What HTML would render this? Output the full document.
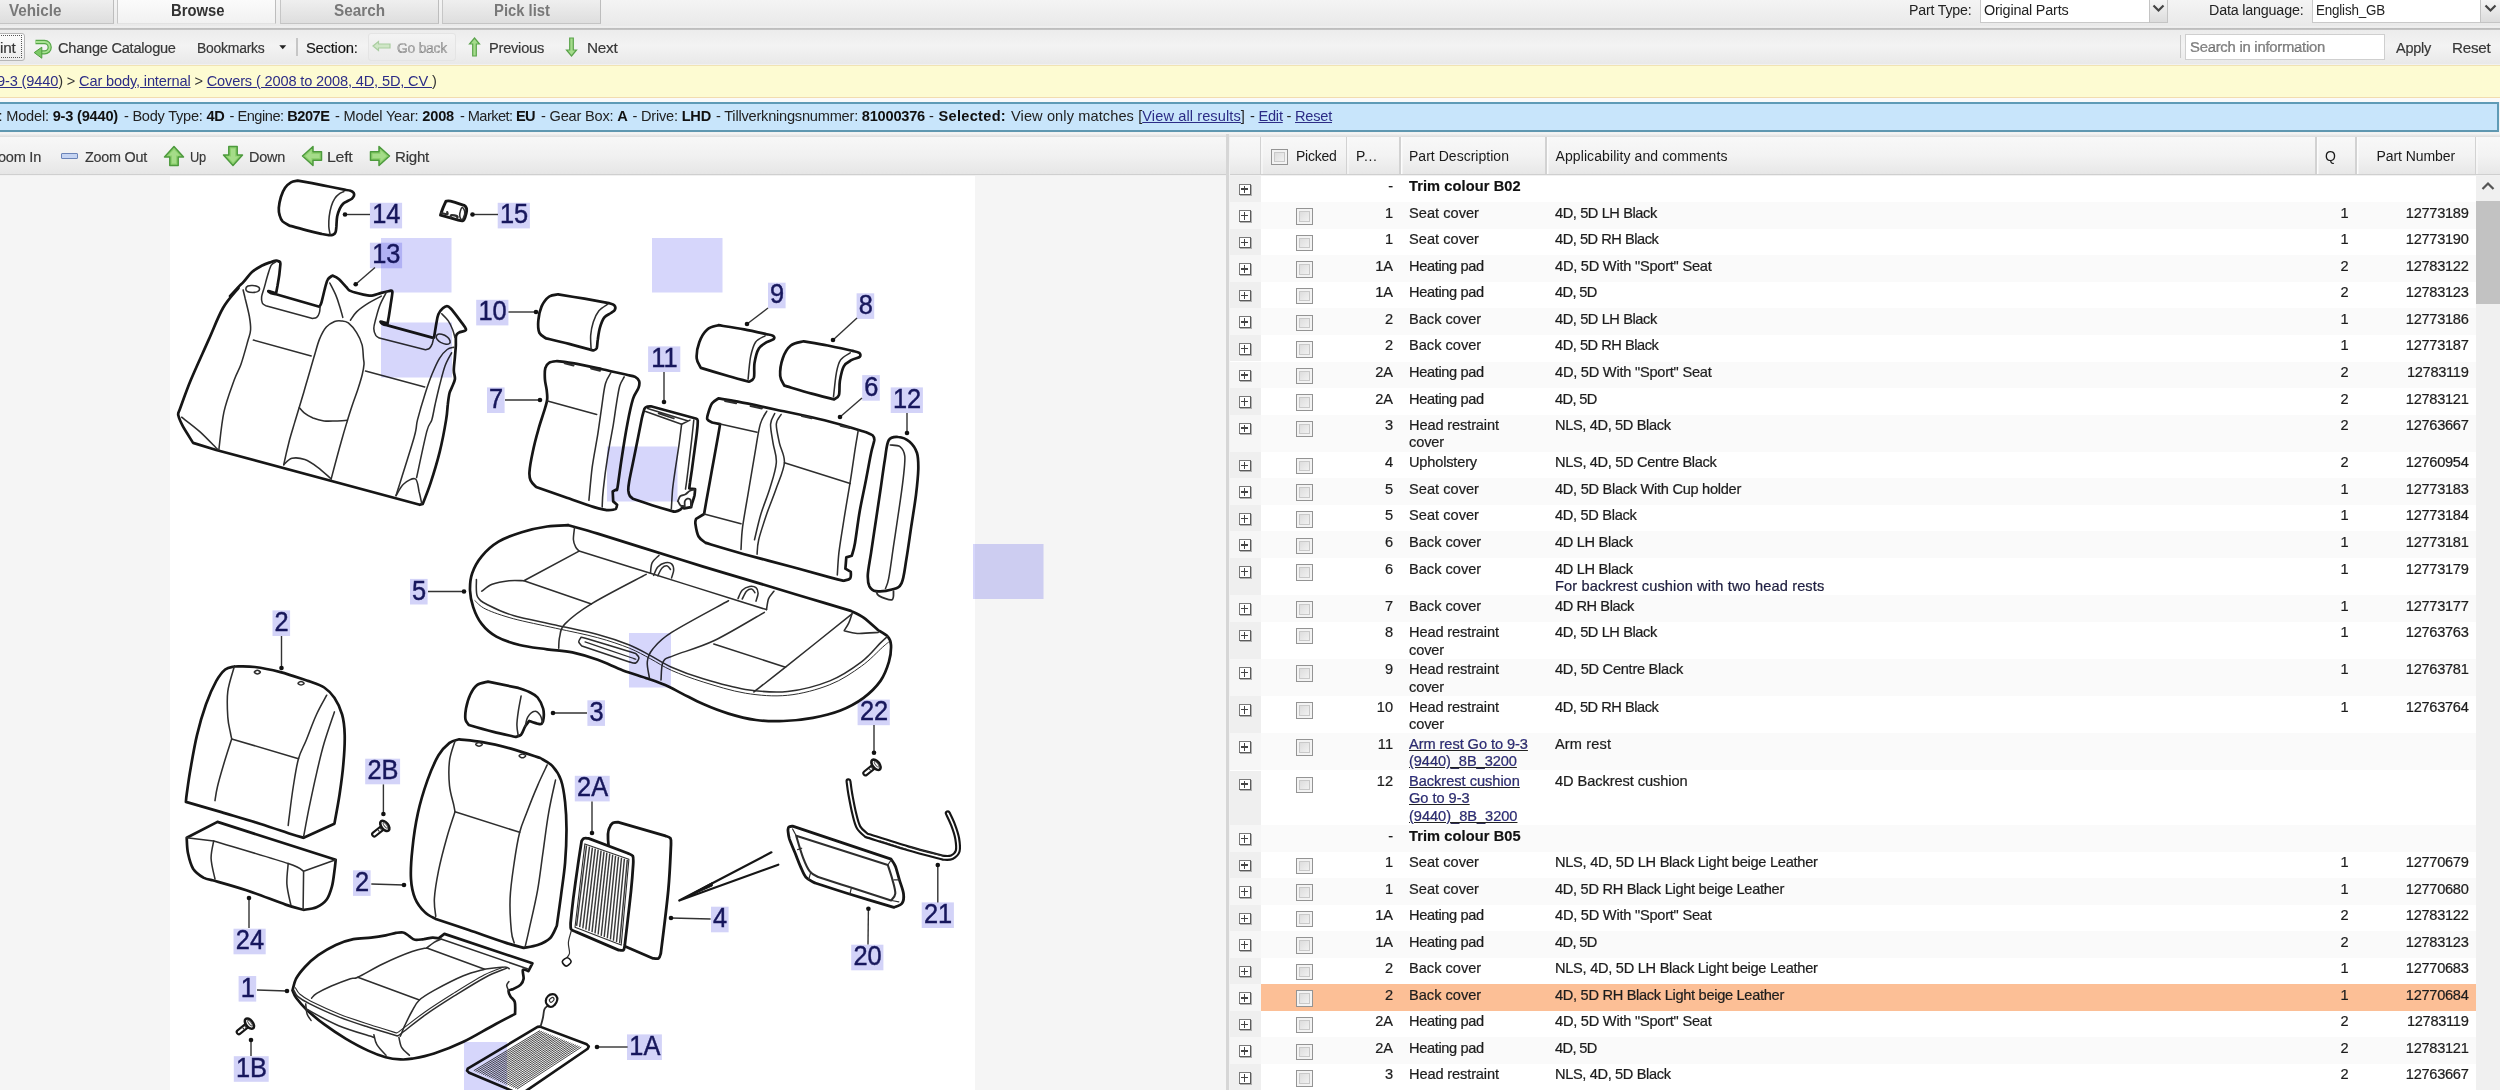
<!DOCTYPE html>
<html><head><meta charset="utf-8"><title>Parts catalogue</title>
<style>
html,body{margin:0;padding:0}
body{width:2500px;height:1090px;overflow:hidden;position:relative;background:#f1f1f1;font-family:"Liberation Sans",sans-serif;font-size:14.6px;color:#1c1c1c}
div,span,i,b,a{box-sizing:border-box}
.abs{position:absolute}
.t{position:absolute;white-space:nowrap;line-height:1}
/* tab bar */
#tabbar{left:0;top:0;width:2500px;height:26px;background:linear-gradient(#f4f4f4,#e9e9e9)}
.tab{position:absolute;top:0;height:24px;border-right:1.5px solid #bdbdbd;border-left:1.5px solid #c6c6c6;border-bottom:1.5px solid #c4c4c4;background:linear-gradient(#efefef,#e3e3e3 70%,#dedede);font-weight:bold;font-size:16px;color:#777;text-align:center;line-height:21px;letter-spacing:-0.2px}
.tab.on{background:linear-gradient(#fbfbfb,#f1f1f1);color:#333;border-bottom-color:#e2e2e2}
.tl{top:2.5px;font-weight:bold;font-size:16px;color:#787878}
#tabline{left:0;top:25.5px;width:2500px;height:4px;background:linear-gradient(#efefef 0,#ececec 60%,#bdbdbd 62%,#c6c6c6 100%)}
/* main toolbar */
#tb{left:0;top:29.5px;width:2500px;height:34.5px;background:linear-gradient(#ececec,#f3f3f3 45%,#e9e9e9)}
.tt{position:absolute;white-space:nowrap;line-height:1;font-size:15.3px;color:#383838;letter-spacing:-0.25px;-webkit-text-stroke:0.2px #383838}
/* breadcrumb */
#bc{left:0;top:65px;width:2500px;height:32.5px;background:#fdfbd2;border-top:1.5px solid #f0e3b4;border-bottom:1.5px solid #f2dcb0}
#bct a,.lnk{color:#2c2c86;text-decoration:underline}
#gap1{left:0;top:97.5px;width:2500px;height:4px;background:#fafafa}
/* vin bar */
#vin{left:0;top:101.5px;width:2498.5px;height:30.5px;background:#c8e5fb;border-top:2px solid #5f9bb6;border-bottom:2px solid #5f97b0;border-right:2px solid #5f9bb6}
.vt{top:108.5px;font-size:14.6px;color:#222}
.vt b{color:#111}
/* sub toolbars */
#ltb{left:0;top:136.5px;width:1226px;height:38.5px;background:linear-gradient(#f7f7f7,#f1f1f1 50%,#e6e6e6);border-bottom:1.5px solid #cfcfcf}
#split{left:1226px;top:134px;width:3px;height:956px;background:#d6d6d6}
#hdr{left:1230px;top:136.5px;width:1270px;height:38.5px;background:linear-gradient(#f8f8f8,#f3f3f3 50%,#e7e7e7);border-bottom:1.5px solid #cfcfcf}
.hs{position:absolute;top:0;width:1.5px;height:37px;background:#d2d2d2;box-shadow:1.5px 0 0 #fcfcfc}
.ht{position:absolute;white-space:nowrap;line-height:1;top:148.6px;font-size:14px;color:#1a1a1a}
/* diagram area */
#dl{left:0;top:176px;width:170px;height:914px;background:#f5f5f5}
#dw{left:170px;top:176px;width:805px;height:914px;background:#fff}
#dr{left:975px;top:176px;width:251px;height:914px;background:#f5f5f5}
/* table */
#tbl{left:1230px;top:175.6px;width:1246px;height:915px;background:#fff;overflow:hidden}
.row{position:absolute;left:1260.5px;width:1215.5px;background:#fff}
.row.alt{background:#fafafa}
.row.sel{background:#fcbf96}
.row>span{position:absolute;top:2.6px;line-height:17.3px;white-space:nowrap;-webkit-text-stroke:0.22px #222}
.ex{position:absolute;left:-30.5px;top:0;width:30.5px;height:100%;background:#efefef}
.row.alt .ex{background:#f6f6f6}
.pl{position:absolute;left:9px;top:8.1px;width:11.6px;height:11.6px;border:1.3px solid #7a7a7a;border-bottom-color:#5c5c5c;border-right-color:#5c5c5c;background:#fff;box-shadow:1px 1px 0 #b0b0b0}
.pl:before{content:"";position:absolute;left:1.2px;right:1.2px;top:3.8px;height:1.4px;background:#444}
.pl:after{content:"";position:absolute;top:1px;bottom:1px;left:3.6px;width:1.4px;background:#444}
.c1{left:35.5px}
.cb{position:absolute;left:0;top:3.6px;width:17px;height:16.5px;border:1.4px solid #949494;background:linear-gradient(135deg,#d6d6d6,#f8f8f8);box-shadow:inset 0 0 0 2px #f3f3f3,inset 0 0 0 3px #c9c9c9}
.c2{right:1083px;text-align:right}
.c3{left:148.5px;white-space:normal}
.c4{left:294.5px}
.c5{right:127.5px}
.c6{right:7.5px;letter-spacing:-0.28px !important}
.grp .c3{font-weight:bold;color:#111}
.cm{color:#1d1d4a}
.row u{color:#2c2c86}
#sb{left:2476px;top:176px;width:24px;height:914px;background:#f0f0f0}
#sbt{left:2476px;top:201px;width:24px;height:102.5px;background:#c2c2c2}
</style></head>
<body>
<!-- tab bar -->
<div id="tabbar" class="abs">
 <div class="tab" style="left:-40px;width:154px"></div>
 <div class="tab on" style="left:117px;width:159px"></div>
 <div class="tab" style="left:279.5px;width:159px"></div>
 <div class="tab" style="left:442px;width:158.5px"></div>
 <span class="t tl" style="left:8.5px;transform:scaleX(0.9518);transform-origin:0 50%">Vehicle</span><span class="t tl" style="left:170.5px;color:#333;transform:scaleX(0.9257);transform-origin:0 50%">Browse</span><span class="t tl" style="left:334px;transform:scaleX(0.9555);transform-origin:0 50%">Search</span><span class="t tl" style="left:494px;transform:scaleX(0.9259);transform-origin:0 50%">Pick list</span>
 <span class="t" style="left:1909px;top:1.5px;font-size:15.2px;color:#222;letter-spacing:-0.2px;transform:scaleX(0.9335);transform-origin:0 50%">Part Type:</span>
 <div class="abs" style="left:1980px;top:-2px;width:188px;height:24.5px;background:#fff;border:1.5px solid #c9c9c9"></div>
 <span class="t" style="left:1984px;top:1.5px;font-size:15.2px;color:#222;letter-spacing:-0.2px;transform:scaleX(0.9473);transform-origin:0 50%">Original Parts</span>
 <div class="abs" style="left:2148.5px;top:-2px;width:19.5px;height:24.5px;background:linear-gradient(#f6f6f6,#dcdcdc);border:1.5px solid #c4c4c4"></div>
 <svg class="abs" style="left:2152px;top:4px" width="13" height="9" viewBox="0 0 13 9"><path d="M1.5 1.5 L6.5 6.5 L11.5 1.5" fill="none" stroke="#444" stroke-width="2.2"/></svg>
 <span class="t" style="left:2209px;top:1.5px;font-size:15.2px;color:#222;letter-spacing:-0.2px;transform:scaleX(0.9428);transform-origin:0 50%">Data language:</span>
 <div class="abs" style="left:2312px;top:-2px;width:190px;height:24.5px;background:#fff;border:1.5px solid #c9c9c9"></div>
 <span class="t" style="left:2316px;top:1.5px;font-size:15.2px;color:#222;letter-spacing:-0.2px;transform:scaleX(0.8823);transform-origin:0 50%">English_GB</span>
 <div class="abs" style="left:2480px;top:-2px;width:22px;height:24.5px;background:linear-gradient(#f6f6f6,#dcdcdc);border:1.5px solid #c4c4c4"></div>
 <svg class="abs" style="left:2484px;top:4px" width="13" height="9" viewBox="0 0 13 9"><path d="M1.5 1.5 L6.5 6.5 L11.5 1.5" fill="none" stroke="#444" stroke-width="2.2"/></svg>
</div>
<div id="tabline" class="abs"></div>

<!-- main toolbar -->
<div id="tb" class="abs"></div>
<div class="abs" style="left:-8px;top:32.5px;width:32.5px;height:28px;border:1.3px solid #b5b5b5;border-radius:3px;background:linear-gradient(#fcfcfc,#ececec)"></div>
<div class="abs" style="left:-8px;top:35px;width:30px;height:23px;border:1.3px dotted #555"></div>
<span class="tt" style="left:0px;top:40px">int</span>
<svg class="abs" style="left:32.5px;top:37.5px" width="21" height="22" viewBox="0 0 21 22"><path d="M2.5 4 H11.5 A5.2 5.2 0 0 1 11.5 14.4 H8" fill="none" stroke="#55a646" stroke-width="4.3"/><path d="M2.5 4 H11.5 A5.2 5.2 0 0 1 11.5 14.4 H8" fill="none" stroke="#a9e294" stroke-width="1.9"/><path d="M8.8 9.2 L1.2 14.6 L8.8 20.2 Z" fill="#7cc966" stroke="#4f9c40" stroke-width="1"/></svg>
<span class="tt" style="left:58px;top:40px;transform:scaleX(0.9528);transform-origin:0 50%">Change Catalogue</span>
<span class="tt" style="left:197px;top:40px;transform:scaleX(0.9089);transform-origin:0 50%">Bookmarks</span>
<svg class="abs" style="left:279px;top:45px" width="8" height="5" viewBox="0 0 8 5"><path d="M0.3 0.3 H7.2 L3.75 4.3 Z" fill="#222"/></svg>
<div class="abs" style="left:296px;top:37.5px;width:1.5px;height:18px;background:#c6c6c6"></div>
<span class="tt" style="left:306px;top:40px;color:#111;transform:scaleX(0.9666);transform-origin:0 50%">Section:</span>
<div class="abs" style="left:367.5px;top:32.5px;width:88px;height:28px;border:1.3px solid #e4e4e4;border-radius:3px;background:linear-gradient(#f3f3f3,#ebebeb)"></div>
<svg class="abs" style="left:372px;top:40px" width="19" height="12" viewBox="0 0 19 12"><path d="M1 6 L6.5 1.5 V4 H18 V8 H6.5 V10.5 Z" fill="#cfe6c6" stroke="#a9cda0" stroke-width="1.2"/></svg>
<span class="tt" style="left:397px;top:40px;color:#b3b3b3;transform:scaleX(0.9055);transform-origin:0 50%">Go back</span>
<svg class="abs" style="left:468px;top:36.5px" width="13" height="20" viewBox="0 0 13 20"><path d="M6.5 1 L11.5 7 H8.3 V19 H4.7 V7 H1.5 Z" fill="#a5dc8c" stroke="#5aa34b" stroke-width="1.2"/></svg>
<span class="tt" style="left:489px;top:40px;transform:scaleX(0.9563);transform-origin:0 50%">Previous</span>
<svg class="abs" style="left:565px;top:36.5px" width="13" height="20" viewBox="0 0 13 20"><path d="M6.5 19 L11.5 13 H8.3 V1 H4.7 V13 H1.5 Z" fill="#a5dc8c" stroke="#5aa34b" stroke-width="1.2"/></svg>
<span class="tt" style="left:586.5px;top:40px;transform:scaleX(1.0015);transform-origin:0 50%">Next</span>
<div class="abs" style="left:2179.5px;top:35px;width:1.5px;height:23px;background:#c9c9c9"></div>
<div class="abs" style="left:2185px;top:33.5px;width:199.5px;height:26.5px;background:#fff;border:1.5px solid #cfcfcf"></div>
<span class="tt" style="left:2189.5px;top:38.5px;color:#8a8a8a;transform:scaleX(0.9692);transform-origin:0 50%">Search in information</span>
<span class="tt" style="left:2396px;top:40px;transform:scaleX(0.9455);transform-origin:0 50%">Apply</span>
<span class="tt" style="left:2452px;top:40px;transform:scaleX(0.9944);transform-origin:0 50%">Reset</span>

<!-- breadcrumb -->
<div id="bc" class="abs"></div>
<span class="t" id="bct" style="left:-3px;top:74px;font-size:14.6px;color:#333;letter-spacing:-0.149px"><a>9-3 (9440</a>) &gt; <a>Car body, internal</a> &gt; <a>Covers ( 2008 to 2008, 4D, 5D, CV </a>)</span>
<div id="gap1" class="abs"></div>

<!-- vin bar -->
<div id="vin" class="abs"></div>
<span class="t vt" style="left:-1.5px;letter-spacing:-0.201px">: Model: <b>9-3 (9440)</b></span>
<span class="t vt" style="left:124px;letter-spacing:-0.258px">- Body Type: <b>4D</b></span>
<span class="t vt" style="left:229.5px;letter-spacing:-0.473px">- Engine: <b>B207E</b></span>
<span class="t vt" style="left:335px;letter-spacing:-0.196px">- Model Year: <b>2008</b></span>
<span class="t vt" style="left:460px;letter-spacing:-0.576px">- Market: <b>EU</b></span>
<span class="t vt" style="left:541px;letter-spacing:-0.209px">- Gear Box: <b>A</b></span>
<span class="t vt" style="left:632.5px;letter-spacing:-0.215px">- Drive: <b>LHD</b></span>
<span class="t vt" style="left:716px;letter-spacing:-0.219px">- Tillverkningsnummer: <b>81000376</b></span>
<span class="t vt" style="left:929px;letter-spacing:0.290px">- <b>Selected:</b></span>
<span class="t vt" style="left:1011px;letter-spacing:0.093px">View only matches [<span class="lnk">View all results</span>]</span>
<span class="t vt" style="left:1250px;letter-spacing:-0.228px">- <span class="lnk">Edit</span> - <span class="lnk">Reset</span></span>

<div class="abs" style="left:0;top:132.5px;width:2500px;height:4px;background:linear-gradient(#f7f7f7,#dcdcdc)"></div>

<!-- left sub toolbar -->
<div id="ltb" class="abs"></div>
<span class="tt" style="left:-2px;top:149px;transform:scaleX(0.9499);transform-origin:0 50%">oom In</span>
<div class="abs" style="left:61px;top:153px;width:16.5px;height:6px;border:1.3px solid #6b84b8;background:#c5d4f2;border-radius:1px"></div>
<span class="tt" style="left:84.5px;top:149px;transform:scaleX(0.9392);transform-origin:0 50%">Zoom Out</span>
<svg class="abs" style="left:163px;top:144.5px" width="22" height="22" viewBox="0 0 22 22"><path d="M11 1.5 L20.5 12 H15.2 V20.5 H6.8 V12 H1.5 Z" fill="#8ed06f" stroke="#4d9a3d" stroke-width="1.5" stroke-linejoin="round"/><path d="M11 4.5 L16.5 10.5 H13 V18.5 H9 V10.5 H5.5 Z" fill="#b4e49b" opacity=".6"/></svg>
<span class="tt" style="left:189.5px;top:149px;transform:scaleX(0.8393);transform-origin:0 50%">Up</span>
<svg class="abs" style="left:222px;top:144.5px" width="22" height="22" viewBox="0 0 22 22"><path d="M11 20.5 L20.5 10 H15.2 V1.5 H6.8 V10 H1.5 Z" fill="#8ed06f" stroke="#4d9a3d" stroke-width="1.5" stroke-linejoin="round"/><path d="M11 17.5 L16.5 11.5 H13 V3.5 H9 V11.5 H5.5 Z" fill="#b4e49b" opacity=".6"/></svg>
<span class="tt" style="left:248.5px;top:149px;transform:scaleX(0.9446);transform-origin:0 50%">Down</span>
<svg class="abs" style="left:301px;top:144.5px" width="22" height="22" viewBox="0 0 22 22"><path d="M1.5 11 L12 1.5 V6.8 H20.5 V15.2 H12 V20.5 Z" fill="#8ed06f" stroke="#4d9a3d" stroke-width="1.5" stroke-linejoin="round"/><path d="M4.5 11 L10.5 5.5 V9 H18.5 V13 H10.5 V16.5 Z" fill="#b4e49b" opacity=".6"/></svg>
<span class="tt" style="left:327px;top:149px;transform:scaleX(1.0402);transform-origin:0 50%">Left</span>
<svg class="abs" style="left:368.5px;top:144.5px" width="22" height="22" viewBox="0 0 22 22"><path d="M20.5 11 L10 1.5 V6.8 H1.5 V15.2 H10 V20.5 Z" fill="#8ed06f" stroke="#4d9a3d" stroke-width="1.5" stroke-linejoin="round"/><path d="M17.5 11 L11.5 5.5 V9 H3.5 V13 H11.5 V16.5 Z" fill="#b4e49b" opacity=".6"/></svg>
<span class="tt" style="left:394.5px;top:149px;transform:scaleX(0.9864);transform-origin:0 50%">Right</span>

<!-- diagram -->
<div id="dl" class="abs"></div><div id="dw" class="abs"></div><div id="dr" class="abs"></div>
<div class="abs" style="left:0;top:176px;width:1226px;height:914px">
<svg width="1226" height="914" viewBox="0 176 1226 914" font-family="Liberation Sans, sans-serif" style="display:block">
<rect x="369.9" y="202.8" width="32.2" height="25.6" fill="#d3d3f8"/>
<rect x="497.7" y="202.8" width="32.2" height="25.6" fill="#d3d3f8"/>
<rect x="369.9" y="242.7" width="32.2" height="25.6" fill="#d3d3f8"/>
<rect x="476.2" y="299.8" width="32.2" height="25.6" fill="#d3d3f8"/>
<rect x="487.0" y="387.4" width="17.6" height="25.6" fill="#d3d3f8"/>
<rect x="410.0" y="578.9" width="17.6" height="25.6" fill="#d3d3f8"/>
<rect x="768.0" y="282.7" width="17.6" height="25.6" fill="#d3d3f8"/>
<rect x="856.6" y="293.3" width="17.6" height="25.6" fill="#d3d3f8"/>
<rect x="648.1" y="346.4" width="32.2" height="25.6" fill="#d3d3f8"/>
<rect x="862.2" y="375.1" width="17.6" height="25.6" fill="#d3d3f8"/>
<rect x="890.7" y="387.4" width="32.2" height="25.6" fill="#d3d3f8"/>
<rect x="272.5" y="610.4" width="17.6" height="25.6" fill="#d3d3f8"/>
<rect x="587.4" y="700.3" width="17.6" height="25.6" fill="#d3d3f8"/>
<rect x="365.2" y="758.7" width="34.9" height="25.6" fill="#d3d3f8"/>
<rect x="574.8" y="775.8" width="34.9" height="25.6" fill="#d3d3f8"/>
<rect x="353.0" y="870.3" width="17.6" height="25.6" fill="#d3d3f8"/>
<rect x="233.5" y="928.7" width="32.2" height="25.6" fill="#d3d3f8"/>
<rect x="238.6" y="976.0" width="17.6" height="25.6" fill="#d3d3f8"/>
<rect x="627.0" y="1034.4" width="34.9" height="25.6" fill="#d3d3f8"/>
<rect x="233.8" y="1056.2" width="34.9" height="25.6" fill="#d3d3f8"/>
<rect x="857.6" y="699.6" width="32.2" height="25.6" fill="#d3d3f8"/>
<rect x="711.0" y="906.7" width="17.6" height="25.6" fill="#d3d3f8"/>
<rect x="921.7" y="902.4" width="32.2" height="25.6" fill="#d3d3f8"/>
<rect x="851.2" y="944.7" width="32.2" height="25.6" fill="#d3d3f8"/>
<path d="M279.5 261.7C279.0 261.5 277.7 260.6 276.1 260.7C274.5 260.8 272.3 261.5 269.9 262.4C267.5 263.2 264.6 264.2 261.6 265.8C258.7 267.4 255.0 269.4 252.0 272.0C249.0 274.7 246.1 279.1 243.8 281.6C241.5 284.2 240.5 284.7 238.3 287.1C236.0 289.6 231.4 294.6 230.0 296.1" fill="none" stroke="#161616" stroke-width="2.7" stroke-linejoin="round" stroke-linecap="round"/>
<path d="M238.4 288.1C235.8 291.4 227.9 299.3 223.0 308.0C218.0 316.7 213.9 328.1 208.5 340.1C203.2 352.1 195.7 368.2 190.8 380.0C185.9 391.8 181.2 405.7 179.2 410.8C179.1 411.6 177.7 412.7 178.3 415.3C178.9 417.9 180.4 421.6 182.8 426.2C185.3 430.8 191.4 440.1 193.1 442.9L216.2 450.0L419.8 504.8L422.7 503.9C424.1 500.4 427.9 491.4 430.7 482.7C433.5 474.1 437.1 462.4 439.7 451.9C442.3 441.4 444.8 427.8 446.1 419.9C447.5 412.0 447.2 408.9 447.8 404.5C448.3 400.1 448.8 396.3 449.4 393.5C450.1 390.8 450.7 390.4 451.6 388.0C452.5 385.6 454.5 382.2 454.9 379.2C455.3 376.3 453.8 374.1 453.8 370.4C453.8 366.7 454.6 361.2 454.9 357.2C455.2 353.2 455.6 349.7 455.8 346.2C456.0 342.7 455.6 338.5 456.0 336.3C456.4 334.1 457.0 333.8 458.2 333.0C459.4 332.2 462.3 331.6 463.2 331.4C463.6 331.0 466.4 330.9 465.9 329.2C465.5 327.4 462.8 324.2 460.4 320.9C458.0 317.6 453.1 311.3 451.6 309.4C450.9 308.8 448.7 306.2 447.2 306.1C445.7 305.9 444.3 306.9 442.8 308.3C441.3 309.6 439.5 311.6 438.4 314.3C437.3 317.0 436.9 320.3 436.2 324.2C435.5 328.1 434.4 335.4 434.0 337.6" fill="none" stroke="#161616" stroke-width="2.7" stroke-linejoin="round" stroke-linecap="round"/>
<path d="M279.5 261.7C279.7 262.0 280.4 261.6 280.4 263.8C280.3 265.9 279.7 271.1 279.3 274.8C278.8 278.4 278.0 282.7 277.5 285.8C276.9 288.9 276.3 292.1 276.1 293.3C274.8 293.0 269.4 291.1 268.5 291.0C267.6 290.9 269.3 292.4 270.6 292.9C271.9 293.5 275.2 294.1 276.1 294.3L319.4 306.7C319.8 306.0 320.6 305.3 321.5 302.3C322.4 299.3 323.9 292.3 324.9 288.5C326.0 284.7 326.4 281.8 327.7 279.6C328.9 277.4 331.7 276.1 332.5 275.5C333.5 276.0 336.3 276.8 338.7 278.9C341.1 281.0 345.1 285.9 347.0 287.8C348.8 289.8 347.9 289.7 349.7 290.6C351.5 291.5 355.0 292.5 358.0 293.3C360.9 294.1 365.1 295.1 367.6 295.4C370.1 295.7 370.8 295.8 373.1 295.4C375.4 295.0 378.4 293.7 381.3 292.9C384.3 292.1 389.4 291.0 391.0 290.6C391.2 290.8 392.4 290.0 392.4 292.0C392.4 293.9 391.6 298.3 391.0 302.3C390.4 306.3 389.5 312.5 388.9 316.0C388.3 319.6 387.8 322.3 387.5 323.6C386.4 323.3 381.5 321.5 380.7 321.5C379.9 321.6 381.6 323.4 382.7 324.0C383.9 324.7 386.7 325.2 387.5 325.4L432.3 337.6" fill="none" stroke="#161616" stroke-width="2.7" stroke-linejoin="round" stroke-linecap="round"/>
<path d="M276.1 261.7C275.3 262.3 272.7 263.0 271.3 265.1C269.9 267.3 269.0 271.1 267.8 274.8C266.7 278.4 265.4 283.5 264.4 287.1C263.4 290.8 262.0 294.1 261.6 296.8C261.3 299.4 261.6 301.5 262.3 303.0C263.0 304.5 265.2 305.3 265.8 305.7L312.6 318.4C313.2 318.2 315.5 318.4 316.7 317.4C317.8 316.5 318.9 314.4 319.4 312.6C320.0 310.8 320.0 307.7 320.1 306.7" fill="none" stroke="#2e2e2e" stroke-width="1.55" stroke-linejoin="round" stroke-linecap="round"/>
<path d="M245.8 288.9C245.8 288.0 246.7 286.6 247.9 286.0C249.0 285.5 251.1 285.4 252.7 285.5C254.3 285.6 256.4 285.9 257.5 286.5C258.7 287.0 259.6 288.1 259.6 288.9C259.6 289.8 258.7 291.0 257.5 291.6C256.4 292.1 254.3 292.4 252.7 292.4C251.1 292.4 249.0 292.3 247.9 291.7C246.7 291.1 245.8 289.9 245.8 288.9Z" fill="none" stroke="#2e2e2e" stroke-width="1.55" stroke-linejoin="round" stroke-linecap="round"/>
<path d="M243.1 289.9C243.4 291.3 244.1 293.8 245.1 298.2C246.2 302.5 248.3 310.8 249.3 316.0C250.2 321.3 250.9 325.7 250.6 329.8C250.4 333.9 249.5 335.1 247.9 340.8C246.3 346.5 243.3 357.7 241.0 364.2C238.7 370.7 237.1 372.0 234.2 380.0C231.4 388.0 226.5 400.4 223.9 412.1C221.4 423.8 219.7 443.7 218.8 450.0" fill="none" stroke="#2e2e2e" stroke-width="1.55" stroke-linejoin="round" stroke-linecap="round"/>
<path d="M253.4 340.1L311.2 355.9" fill="none" stroke="#2e2e2e" stroke-width="1.55" stroke-linejoin="round" stroke-linecap="round"/>
<path d="M283.7 464.8C284.6 460.6 287.7 447.1 289.5 440.0C291.4 432.9 293.0 428.1 294.7 422.4C296.4 416.6 298.2 410.8 299.8 405.5C301.4 400.2 303.0 395.0 304.2 390.8C305.4 386.7 305.4 386.3 307.1 380.7C308.7 375.1 311.9 364.2 313.9 357.3C316.0 350.4 317.4 344.5 319.4 339.4C321.5 334.4 323.8 330.0 326.3 327.1C328.8 324.1 332.0 322.6 334.6 321.5C337.1 320.5 339.2 320.6 341.4 320.9C343.7 321.1 345.8 321.0 348.3 322.9C350.8 324.9 354.3 328.9 356.6 332.6C358.9 336.2 360.9 340.6 362.1 344.9C363.2 349.3 363.1 355.5 363.5 358.7C363.8 361.9 364.2 361.7 364.0 364.4C363.8 367.1 363.2 370.5 362.2 374.7C361.2 378.8 359.4 384.5 357.8 389.4C356.2 394.3 354.4 398.9 352.7 404.0C350.9 409.2 349.4 414.2 347.5 420.2C345.7 426.2 344.4 430.2 341.7 440.0C338.9 449.8 332.9 472.4 331.2 478.9" fill="none" stroke="#2e2e2e" stroke-width="1.55" stroke-linejoin="round" stroke-linecap="round"/>
<path d="M299.4 407.7C300.2 408.6 302.0 411.1 304.2 412.8C306.5 414.6 309.7 416.6 313.0 418.0C316.3 419.3 320.2 420.4 324.0 420.9C327.8 421.4 331.9 421.0 335.8 420.9C339.6 420.8 345.3 420.4 347.2 420.3" fill="none" stroke="#2e2e2e" stroke-width="1.55" stroke-linejoin="round" stroke-linecap="round"/>
<path d="M329.8 283.0C330.8 285.1 334.2 291.3 335.9 295.4C337.7 299.5 338.9 304.1 340.1 307.8C341.2 311.5 342.4 315.8 342.8 317.4M381.3 296.1C379.1 297.4 371.7 301.0 367.6 303.7C363.5 306.3 359.4 309.2 356.6 311.9C353.7 314.7 351.4 318.8 350.4 320.2" fill="none" stroke="#2e2e2e" stroke-width="1.55" stroke-linejoin="round" stroke-linecap="round"/>
<path d="M386.9 291.3C385.7 293.6 381.8 300.4 380.0 305.0C378.1 309.6 376.9 314.9 375.8 318.8C374.8 322.7 373.8 325.7 373.8 328.4C373.8 331.2 374.9 333.7 375.8 335.3C376.8 336.9 378.7 337.6 379.3 338.1L425.4 349.8C426.1 349.5 428.4 349.4 429.5 348.4C430.7 347.3 431.6 345.3 432.3 343.6C432.9 341.8 433.4 339.0 433.6 338.1" fill="none" stroke="#2e2e2e" stroke-width="1.55" stroke-linejoin="round" stroke-linecap="round"/>
<path d="M365.5 371.1L424.7 386.9" fill="none" stroke="#2e2e2e" stroke-width="1.55" stroke-linejoin="round" stroke-linecap="round"/>
<path d="M436.2 336.9C436.3 336.0 436.9 334.7 437.9 334.3C438.8 333.9 440.2 333.9 441.7 334.3C443.3 334.7 445.8 335.8 447.2 336.9C448.6 337.9 449.6 339.6 450.0 340.7C450.3 341.8 450.1 342.9 449.4 343.5C448.8 344.0 447.6 344.4 446.1 344.2C444.6 344.0 442.1 343.1 440.6 342.4C439.1 341.6 438.0 340.5 437.3 339.6C436.6 338.7 436.1 337.7 436.2 336.9Z" fill="none" stroke="#2e2e2e" stroke-width="1.55" stroke-linejoin="round" stroke-linecap="round"/>
<path d="M441.7 313.8C442.8 314.9 446.5 318.2 448.3 320.9C450.1 323.6 451.6 327.0 452.7 329.7C453.8 332.5 454.5 336.1 454.9 337.4" fill="none" stroke="#2e2e2e" stroke-width="1.55" stroke-linejoin="round" stroke-linecap="round"/>
<path d="M453.8 347.3C452.7 347.7 449.6 347.7 447.2 349.5C444.8 351.3 442.1 354.1 439.5 358.3C436.9 362.5 434.2 368.9 431.8 374.8C429.4 380.7 427.6 386.0 425.2 393.5C422.8 401.0 419.4 412.5 417.5 419.9C415.6 427.3 417.6 425.2 414.0 437.8C410.4 450.4 399.0 486.0 396.0 495.6M451.6 352.8C450.5 355.0 447.0 360.5 445.0 366.0C443.0 371.5 441.2 379.4 439.5 385.8C437.9 392.2 436.4 398.8 435.1 404.5C433.8 410.2 433.2 415.5 431.8 419.9C430.4 424.4 429.4 421.8 426.8 431.4C424.3 441.0 418.3 469.9 416.6 477.6" fill="none" stroke="#2e2e2e" stroke-width="1.55" stroke-linejoin="round" stroke-linecap="round"/>
<path d="M297.7 180.6C296.6 180.9 293.1 181.1 291.0 182.3C288.9 183.5 286.8 185.3 285.1 187.8C283.4 190.2 282.0 193.6 280.9 197.0C279.9 200.4 279.0 204.8 278.8 207.9C278.6 211.0 279.0 213.2 279.7 215.5C280.3 217.7 281.0 219.7 282.6 221.4C284.2 223.0 288.2 224.9 289.3 225.6C292.4 226.4 302.3 229.2 307.8 230.6C313.3 232.0 318.6 233.2 322.1 234.0C325.6 234.7 327.7 235.0 328.8 235.2C329.5 235.2 331.9 235.3 333.0 234.8C334.1 234.3 335.0 233.7 335.5 232.3C336.1 230.9 336.1 229.1 336.4 226.4C336.6 223.7 336.6 219.3 337.2 216.3C337.8 213.4 338.7 210.9 339.7 208.8C340.7 206.7 341.7 205.1 343.1 203.7C344.5 202.4 346.6 201.6 348.1 200.8C349.6 199.9 350.9 199.5 351.9 198.7C352.9 197.8 353.7 196.7 354.0 195.7C354.3 194.8 354.1 193.6 353.6 192.8C353.0 192.0 352.0 191.2 350.6 190.7C349.3 190.2 346.4 190.0 345.6 189.9C342.8 189.3 334.4 187.6 328.8 186.5C323.2 185.4 317.2 184.1 312.0 183.1C306.8 182.2 300.1 181.0 297.7 180.6" fill="#fff" stroke="#161616" stroke-width="2.7" stroke-linejoin="round" stroke-linecap="round"/>
<path d="M343.9 191.5C343.1 192.0 340.4 192.9 338.9 194.1C337.3 195.2 335.9 196.7 334.7 198.7C333.4 200.7 332.2 203.3 331.3 206.2C330.4 209.2 329.6 213.0 329.2 216.3C328.8 219.7 328.7 223.4 328.8 226.4C328.9 229.4 329.9 233.1 330.1 234.4" fill="none" stroke="#2e2e2e" stroke-width="1.55" stroke-linejoin="round" stroke-linecap="round"/>
<path d="M440.5 215.1C440.9 213.9 442.1 210.2 443.0 207.9C444.0 205.6 445.5 202.3 446.0 201.2C446.8 201.2 447.5 200.4 450.6 201.2C453.8 202.0 462.5 205.0 464.9 205.8C465.2 206.3 466.4 207.4 466.6 208.8C466.8 210.1 466.6 212.0 466.1 213.8C465.7 215.6 464.7 218.5 464.0 219.7C463.4 220.9 462.6 220.7 462.4 220.9C461.7 220.8 461.8 221.1 458.2 220.1C454.5 219.1 443.5 215.9 440.5 215.1" fill="#fff" stroke="#161616" stroke-width="2.9" stroke-linejoin="round" stroke-linecap="round"/>
<path d="M462.4 207.5C461.6 207.5 460.7 209.8 460.3 211.3C459.8 212.8 459.6 214.9 459.8 216.3C460.1 217.7 461.2 219.7 461.9 219.7C462.6 219.7 463.6 217.7 464.0 216.3C464.5 214.9 465.0 212.8 464.7 211.3C464.4 209.8 463.1 207.5 462.4 207.5Z" fill="none" stroke="#2e2e2e" stroke-width="1.55" stroke-linejoin="round" stroke-linecap="round"/>
<path d="M441.4 213.0C442.3 213.2 446.3 214.4 447.2 214.2C448.2 214.1 447.2 212.5 447.2 212.1M450.6 217.2C450.7 216.8 450.3 215.2 451.4 215.1C452.6 214.9 456.4 215.8 457.3 216.3C458.2 216.9 457.0 218.1 456.9 218.4" fill="none" stroke="#2e2e2e" stroke-width="2.2" stroke-linejoin="round" stroke-linecap="round"/>
<path d="M558.1 294.3C556.6 294.7 552.0 294.5 549.3 296.5C546.5 298.5 543.4 302.4 541.6 306.4C539.8 310.5 538.6 316.3 538.3 320.7C537.9 325.2 538.1 329.9 539.4 332.9C540.7 335.8 544.9 337.5 546.0 338.4C549.8 339.3 561.2 341.9 569.1 343.9C577.0 345.9 589.3 349.4 593.3 350.5C593.9 350.1 595.9 350.1 596.7 348.3C597.4 346.4 597.2 343.0 597.8 339.5C598.3 336.0 598.9 331.0 600.0 327.4C601.1 323.7 602.5 319.8 604.4 317.4C606.2 315.1 609.2 314.3 611.0 313.0C612.7 311.8 614.4 311.0 614.9 309.7C615.5 308.5 615.3 306.4 614.3 305.3C613.2 304.2 609.7 303.5 608.8 303.1C604.7 302.4 593.0 300.2 584.5 298.7C576.1 297.3 562.5 295.1 558.1 294.3" fill="#fff" stroke="#161616" stroke-width="2.7" stroke-linejoin="round" stroke-linecap="round"/>
<path d="M607.7 304.2C606.2 305.3 601.2 307.9 598.9 310.8C596.5 313.8 594.7 317.8 593.3 321.9C592.0 325.9 591.1 330.5 590.7 335.1C590.3 339.7 591.1 347.0 591.1 349.4" fill="none" stroke="#2e2e2e" stroke-width="1.55" stroke-linejoin="round" stroke-linecap="round"/>
<path d="M557.0 361.1C555.7 361.3 551.2 361.4 549.3 362.6C547.3 363.8 546.1 365.4 545.3 368.1C544.6 370.9 544.7 375.4 544.9 379.1C545.1 382.8 546.3 386.6 546.7 390.1C547.0 393.6 547.6 396.4 547.1 400.0C546.6 403.7 545.3 407.2 543.8 412.2C542.3 417.1 540.1 423.2 538.3 429.8C536.4 436.4 534.2 444.8 532.8 451.8C531.3 458.8 529.8 466.9 529.5 471.6C529.1 476.4 529.5 477.9 530.6 480.4C531.7 483.0 535.2 485.9 536.1 487.0C540.9 488.7 555.2 493.7 564.7 497.0C574.3 500.3 586.4 504.7 593.3 506.9C600.3 509.1 604.4 509.6 606.6 510.2C608.0 510.0 613.6 510.0 615.4 509.1C617.1 508.2 616.8 505.4 617.1 504.7L613.2 501.4L612.7 491.5L616.5 489.3C616.7 488.9 616.7 492.6 617.6 487.0C618.5 481.5 620.3 466.9 622.0 456.2C623.6 445.6 625.7 432.7 627.5 423.2C629.3 413.6 631.2 404.8 633.0 398.9C634.8 393.1 637.5 390.9 638.5 387.9C639.5 385.0 639.7 383.2 639.2 381.3C638.6 379.5 637.0 377.9 635.2 376.9C633.4 375.9 629.7 375.4 628.6 375.2C624.2 374.2 611.0 371.1 602.2 369.2C593.3 367.3 583.3 365.1 575.7 363.7C568.2 362.3 560.1 361.5 557.0 361.1" fill="#fff" stroke="#161616" stroke-width="2.7" stroke-linejoin="round" stroke-linecap="round"/>
<path d="M611.0 372.5C610.1 374.3 606.9 378.4 605.5 383.5C604.0 388.7 603.4 394.9 602.2 403.3C600.9 411.8 599.4 423.5 597.8 434.2C596.1 444.8 593.7 456.2 592.2 467.2C590.8 478.2 589.5 494.8 588.9 500.3" fill="none" stroke="#2e2e2e" stroke-width="1.55" stroke-linejoin="round" stroke-linecap="round"/>
<path d="M624.2 376.9C623.5 378.4 621.1 381.3 619.8 385.7C618.5 390.1 617.6 396.7 616.5 403.3C615.4 410.0 614.6 416.6 613.2 425.4C611.7 434.2 609.3 445.6 607.7 456.2C606.0 466.9 604.2 480.8 603.3 489.3C602.3 497.7 602.3 503.9 602.2 506.9" fill="none" stroke="#2e2e2e" stroke-width="1.55" stroke-linejoin="round" stroke-linecap="round"/>
<path d="M547.5 401.1L596.7 414.4" fill="none" stroke="#2e2e2e" stroke-width="1.55" stroke-linejoin="round" stroke-linecap="round"/>
<path d="M564.7 363.3L573.5 365.5M591.1 368.5L600.0 370.7" fill="none" stroke="#2e2e2e" stroke-width="2" stroke-linejoin="round" stroke-linecap="round"/>
<path d="M644.4 408.9C644.7 408.6 645.2 407.4 646.3 407.0C647.4 406.5 650.1 406.4 650.8 406.3L695.7 418.5C696.1 418.8 697.4 418.3 697.7 420.4C697.9 422.6 697.6 426.3 697.0 431.3C696.5 436.4 695.3 444.2 694.5 450.6C693.6 457.0 692.6 464.5 691.9 469.9C691.1 475.2 690.4 479.6 690.0 482.7C689.5 485.8 689.4 487.5 689.3 488.5L695.1 489.1C695.0 490.2 694.9 493.2 694.5 495.5C694.0 497.9 692.7 501.3 692.1 503.2C691.6 505.2 691.4 506.4 691.2 507.1L684.2 508.4L682.9 506.4C682.5 507.0 681.6 508.8 680.3 509.7C679.1 510.5 676.7 511.4 675.2 511.6C673.7 511.8 672.0 511.0 671.3 510.9C668.1 510.0 658.5 507.2 652.1 505.2C645.7 503.1 636.0 499.8 632.8 498.7C632.3 498.2 630.4 496.9 629.6 495.5C628.9 494.1 628.5 492.5 628.3 490.4C628.2 488.3 628.2 487.2 629.0 482.7C629.7 478.2 631.3 470.9 632.8 463.4C634.3 456.0 636.5 445.3 638.0 437.8C639.5 430.3 640.8 423.3 641.8 418.5C642.9 413.7 644.0 410.5 644.4 408.9" fill="#fff" stroke="#161616" stroke-width="2.7" stroke-linejoin="round" stroke-linecap="round"/>
<path d="M645.7 411.5L681.6 424.3L690.0 420.1M647.6 408.5L687.4 420.8M658.5 413.6L673.9 418.5" fill="none" stroke="#2e2e2e" stroke-width="1.55" stroke-linejoin="round" stroke-linecap="round"/>
<path d="M681.6 424.3C681.2 427.6 680.1 436.6 679.1 444.2C678.0 451.8 676.3 462.4 675.2 469.9C674.1 477.3 673.3 482.6 672.6 489.1C672.0 495.6 671.6 505.7 671.3 509.0M693.8 420.1C693.5 423.0 692.6 431.2 691.9 437.8C691.1 444.4 690.2 452.5 689.3 459.6C688.5 466.6 687.4 475.2 686.8 480.1C686.1 485.0 685.7 487.6 685.5 489.1" fill="none" stroke="#2e2e2e" stroke-width="1.55" stroke-linejoin="round" stroke-linecap="round"/>
<path d="M677.8 501.3C678.2 500.5 679.1 497.4 680.3 496.2C681.6 495.0 683.9 495.2 685.5 494.2C687.1 493.3 688.4 491.5 690.0 490.7C691.5 489.8 693.9 489.6 694.7 489.4M678.4 502.0C678.7 502.5 679.5 504.4 680.3 505.2C681.1 505.9 682.7 506.2 683.2 506.4M684.8 507.1C684.8 506.1 684.4 502.7 684.8 501.3C685.3 499.9 686.4 499.0 687.4 498.7C688.4 498.5 690.0 498.7 690.6 500.0C691.2 501.3 690.8 505.4 690.9 506.4" fill="none" stroke="#2e2e2e" stroke-width="1.8" stroke-linejoin="round" stroke-linecap="round"/>
<path d="M718.5 325.2C716.7 325.9 710.5 326.6 707.3 329.4C704.1 332.2 701.0 337.4 699.3 342.2C697.5 347.1 696.4 354.0 696.7 358.3C697.0 362.6 700.2 366.3 700.9 367.9C705.4 369.3 720.1 373.7 728.2 376.0C736.2 378.3 745.6 380.8 749.0 381.7C749.8 381.0 752.9 380.7 753.9 377.6C754.8 374.5 753.7 367.9 754.5 363.1C755.3 358.3 756.6 352.1 758.7 348.7C760.7 345.2 764.2 343.9 766.7 342.2C769.2 340.6 772.7 340.1 773.8 339.0C774.8 338.0 774.3 336.6 773.1 335.8C771.9 335.0 767.8 334.5 766.7 334.2C763.0 333.4 752.2 330.9 744.2 329.4C736.2 327.9 722.8 325.9 718.5 325.2" fill="#fff" stroke="#161616" stroke-width="2.7" stroke-linejoin="round" stroke-linecap="round"/>
<path d="M765.1 335.8C763.5 336.9 757.9 338.8 755.5 342.2C753.1 345.7 751.9 350.5 750.6 356.7C749.4 362.9 748.5 375.4 748.1 379.2" fill="none" stroke="#2e2e2e" stroke-width="1.55" stroke-linejoin="round" stroke-linecap="round"/>
<path d="M803.6 341.3C801.5 342.0 794.3 342.6 790.8 345.5C787.3 348.3 784.5 353.2 782.8 358.3C781.0 363.4 779.9 371.4 780.2 376.0C780.5 380.5 783.7 384.0 784.4 385.6C788.9 386.9 803.4 391.3 811.7 393.6C819.9 395.9 830.4 398.4 834.1 399.4C834.9 398.7 838.0 398.3 838.9 395.2C839.9 392.1 839.1 385.6 839.9 380.8C840.7 376.0 841.8 369.8 843.8 366.3C845.7 362.9 849.1 361.5 851.8 359.9C854.5 358.3 858.6 357.9 859.8 356.7C861.0 355.5 860.4 353.8 859.2 352.8C858.0 351.9 853.8 351.2 852.8 350.9C848.6 350.0 835.9 347.1 827.7 345.5C819.5 343.9 807.6 342.0 803.6 341.3" fill="#fff" stroke="#161616" stroke-width="2.7" stroke-linejoin="round" stroke-linecap="round"/>
<path d="M850.2 352.8C848.6 354.0 842.9 356.6 840.6 359.9C838.2 363.2 837.6 366.6 836.4 372.8C835.2 378.9 834.0 392.8 833.5 396.8" fill="none" stroke="#2e2e2e" stroke-width="1.55" stroke-linejoin="round" stroke-linecap="round"/>
<path d="M718.5 398.4C717.5 399.2 713.8 400.8 712.1 403.3C710.4 405.7 709.1 410.2 708.3 412.9C707.5 415.6 706.7 417.7 707.3 419.3C707.9 420.9 711.3 422.0 712.1 422.5L720.1 424.1C719.8 426.3 719.2 429.5 717.9 437.0C716.6 444.5 714.0 458.4 712.1 469.1C710.2 479.8 707.7 493.7 706.3 501.2C705.0 508.7 704.5 511.9 704.1 514.0L696.1 518.9C695.9 519.7 695.0 520.7 695.4 523.7C695.8 526.6 696.9 533.3 698.6 536.5C700.3 539.7 704.5 541.9 705.7 542.9C712.1 544.8 729.8 550.2 744.2 554.2C758.7 558.2 777.9 563.1 792.4 567.0C806.8 570.9 822.4 575.3 830.9 577.6C839.5 579.9 841.6 580.3 843.8 580.8C844.8 580.4 849.0 579.8 850.2 578.3C851.4 576.8 850.7 572.9 850.8 571.8L845.4 568.6L846.3 557.4L851.8 555.8C852.3 553.6 853.7 550.4 855.0 542.9C856.3 535.4 857.9 521.5 859.8 510.8C861.7 500.1 864.4 488.3 866.2 478.7C868.1 469.1 869.7 459.4 871.1 453.0C872.4 446.6 874.0 443.1 874.3 440.2C874.5 437.2 874.0 436.7 872.7 435.4C871.3 434.0 867.3 432.7 866.2 432.2C859.3 430.2 839.5 424.0 824.5 420.3C809.5 416.5 790.8 412.8 776.3 409.7C761.9 406.6 747.4 403.5 737.8 401.7C728.2 399.8 721.7 399.0 718.5 398.4" fill="#fff" stroke="#161616" stroke-width="2.7" stroke-linejoin="round" stroke-linecap="round"/>
<path d="M766.7 411.3C765.6 413.4 762.1 417.7 760.3 424.1C758.4 430.6 757.3 439.1 755.5 449.8C753.6 460.5 751.2 475.5 749.0 488.3C746.9 501.2 744.0 516.7 742.6 526.9C741.3 537.0 741.3 545.6 741.0 549.4" fill="none" stroke="#2e2e2e" stroke-width="1.55" stroke-linejoin="round" stroke-linecap="round"/>
<path d="M781.1 414.5C780.3 416.1 776.6 419.3 776.3 424.1C776.1 428.9 778.2 437.0 779.5 443.4C780.9 449.8 784.9 455.2 784.4 462.7C783.8 470.2 779.3 479.8 776.3 488.3C773.4 496.9 769.6 505.5 766.7 514.0C763.8 522.6 760.3 533.0 758.7 539.7C757.1 546.4 757.3 551.8 757.1 554.2" fill="none" stroke="#2e2e2e" stroke-width="1.55" stroke-linejoin="round" stroke-linecap="round"/>
<path d="M774.7 413.5C774.0 415.3 770.8 419.2 770.6 424.1C770.3 429.1 772.2 437.0 773.1 443.4C774.1 449.8 776.9 455.2 776.3 462.7C775.8 470.2 772.5 479.8 769.9 488.3C767.3 496.9 763.5 505.5 760.9 514.0C758.3 522.6 755.6 535.4 754.5 539.7" fill="none" stroke="#2e2e2e" stroke-width="1.55" stroke-linejoin="round" stroke-linecap="round"/>
<path d="M784.4 462.7L850.2 483.5" fill="none" stroke="#2e2e2e" stroke-width="1.55" stroke-linejoin="round" stroke-linecap="round"/>
<path d="M858.2 430.6C857.7 433.8 856.3 441.3 855.0 449.8C853.7 458.4 852.1 470.2 850.2 481.9C848.3 493.7 845.6 508.7 843.8 520.5C841.9 532.2 840.0 543.5 838.9 552.6C837.9 561.7 837.6 571.3 837.3 575.0" fill="none" stroke="#2e2e2e" stroke-width="1.55" stroke-linejoin="round" stroke-linecap="round"/>
<path d="M720.1 424.1L757.1 432.2M704.1 514.0L741.0 523.7" fill="none" stroke="#2e2e2e" stroke-width="1.55" stroke-linejoin="round" stroke-linecap="round"/>
<path d="M725.0 401.0L736.2 403.3M750.6 406.1L761.9 408.4M802.0 416.1L811.7 418.3M840.6 425.7L850.2 428.0" fill="none" stroke="#2e2e2e" stroke-width="2" stroke-linejoin="round" stroke-linecap="round"/>
<path d="M888.7 440.2C891.0 436.4 894.9 436.7 898.3 437.0C901.8 437.2 906.5 439.1 909.6 441.8C912.7 444.5 915.5 448.5 917.0 453.0C918.4 457.6 918.4 462.1 918.3 469.1C918.1 476.0 917.2 485.1 916.0 494.8C914.8 504.4 912.8 516.2 911.2 526.9C909.6 537.6 908.0 549.6 906.4 559.0C904.8 568.4 904.0 578.0 901.6 583.1C899.2 588.2 896.2 588.2 891.9 589.5C887.6 590.8 879.6 591.6 875.9 591.1C872.1 590.6 870.8 589.0 869.4 586.3C868.1 583.6 867.6 580.7 867.8 575.0C868.1 569.4 869.7 561.7 871.1 552.6C872.4 543.5 874.3 531.2 875.9 520.5C877.5 509.8 879.2 498.5 880.7 488.3C882.2 478.2 883.5 467.5 884.9 459.4C886.2 451.4 886.5 443.9 888.7 440.2Z" fill="#fff" stroke="#161616" stroke-width="2.7" stroke-linejoin="round" stroke-linecap="round"/>
<path d="M890.3 445.0C891.9 445.3 897.5 444.7 900.0 446.6C902.4 448.5 904.2 450.9 904.8 456.2C905.3 461.6 904.2 469.1 903.2 478.7C902.1 488.3 900.0 502.8 898.3 514.0C896.7 525.3 895.1 535.4 893.5 546.1C891.9 556.9 890.1 571.2 888.7 578.3C887.4 585.3 886.0 586.8 885.5 588.5" fill="none" stroke="#2e2e2e" stroke-width="1.55" stroke-linejoin="round" stroke-linecap="round"/>
<path d="M876.5 591.7C876.9 592.4 876.5 594.6 879.1 595.9C881.7 597.3 889.5 600.6 891.9 599.8C894.3 599.0 893.3 592.5 893.5 591.1" fill="none" stroke="#2e2e2e" stroke-width="1.8" stroke-linejoin="round" stroke-linecap="round"/>
<path d="M568.2 525.2C564.6 525.4 554.8 525.3 547.1 526.5C539.3 527.6 529.8 529.6 521.7 532.2C513.7 534.7 505.2 537.6 498.5 541.7C491.9 545.7 486.0 551.1 481.7 556.4C477.3 561.7 474.1 567.7 472.2 573.3C470.2 578.9 469.9 584.6 470.0 590.2C470.2 595.8 471.3 601.4 473.2 607.1C475.1 612.7 477.8 619.0 481.7 623.9C485.5 628.9 490.1 633.1 496.4 636.6C502.8 640.1 511.2 642.9 519.6 645.0C528.1 647.2 538.3 648.0 547.1 649.3C555.9 650.5 563.9 650.7 572.4 652.4C580.8 654.2 589.3 656.8 597.7 659.8C606.1 662.8 614.6 667.2 623.0 670.4C631.5 673.5 641.3 676.3 648.3 678.8C655.4 681.3 659.6 682.7 665.2 685.1C670.9 687.6 675.8 690.4 682.1 693.6C688.4 696.7 695.5 700.8 703.2 704.1C710.9 707.5 719.7 711.0 728.5 713.6C737.3 716.3 746.8 718.7 756.0 720.0C765.1 721.2 773.9 721.4 783.4 721.0C792.9 720.7 803.4 719.6 812.9 717.8C822.4 716.1 831.9 713.8 840.4 710.5C848.8 707.1 856.9 702.7 863.6 697.8C870.3 692.9 876.2 686.9 880.5 680.9C884.7 674.9 887.1 667.9 888.9 661.9C890.7 655.9 891.2 649.3 891.0 645.0C890.8 640.8 890.0 639.1 887.8 636.6C885.7 634.1 879.9 631.3 878.3 630.3C875.9 628.2 868.1 620.9 863.6 617.6C859.0 614.4 853.0 612.0 850.9 610.9C843.9 608.8 822.8 602.4 808.7 598.2C794.6 594.0 784.1 590.8 766.5 585.5C748.9 580.3 724.3 573.0 703.2 566.6C682.1 560.1 657.5 552.4 639.9 546.9C622.3 541.4 609.7 537.3 597.7 533.6C585.7 530.0 573.1 526.6 568.2 525.2" fill="#fff" stroke="#161616" stroke-width="2.7" stroke-linejoin="round" stroke-linecap="round"/>
<path d="M574.5 527.9C574.3 529.9 573.3 536.4 573.4 539.5C573.6 542.7 574.6 545.0 575.6 546.9C576.5 548.9 578.5 550.4 579.1 551.1C591.0 554.8 624.5 565.2 650.5 573.3C676.4 581.4 715.5 593.6 734.9 599.7C754.2 605.7 761.2 607.9 766.5 609.6" fill="none" stroke="#2e2e2e" stroke-width="1.55" stroke-linejoin="round" stroke-linecap="round"/>
<path d="M579.1 551.1L523.9 580.7L591.4 603.9" fill="none" stroke="#2e2e2e" stroke-width="1.55" stroke-linejoin="round" stroke-linecap="round"/>
<path d="M481.7 591.2C483.4 590.1 487.6 586.0 492.2 584.3C496.8 582.5 503.8 581.3 509.1 580.7C514.4 580.1 521.4 580.7 523.9 580.7" fill="none" stroke="#2e2e2e" stroke-width="1.55" stroke-linejoin="round" stroke-linecap="round"/>
<path d="M646.2 574.4C637.1 579.3 604.9 595.6 591.4 603.9C577.8 612.2 570.3 618.5 565.0 623.9C559.7 629.4 560.8 632.6 559.7 636.6C558.7 640.6 558.8 646.3 558.7 648.2" fill="none" stroke="#2e2e2e" stroke-width="1.55" stroke-linejoin="round" stroke-linecap="round"/>
<path d="M728.5 600.7C719.0 606.0 684.2 624.3 671.6 632.4C658.9 640.5 656.6 644.3 652.6 649.3C648.5 654.2 647.8 657.2 647.3 661.9C646.8 666.7 649.1 675.1 649.4 677.8" fill="none" stroke="#2e2e2e" stroke-width="1.55" stroke-linejoin="round" stroke-linecap="round"/>
<path d="M764.4 612.3C756.0 617.1 728.9 633.6 713.8 640.8C698.6 648.0 682.1 652.1 673.7 655.6C665.2 659.1 665.2 657.9 663.1 661.9C661.0 666.0 661.4 676.9 661.0 679.9" fill="none" stroke="#2e2e2e" stroke-width="1.55" stroke-linejoin="round" stroke-linecap="round"/>
<path d="M713.8 644.0L785.5 667.2" fill="none" stroke="#2e2e2e" stroke-width="1.55" stroke-linejoin="round" stroke-linecap="round"/>
<path d="M852.0 613.8C840.9 622.7 801.9 654.2 785.5 667.2C769.2 680.2 759.1 687.8 753.9 691.9" fill="none" stroke="#2e2e2e" stroke-width="1.55" stroke-linejoin="round" stroke-linecap="round"/>
<path d="M476.4 579.6C476.6 582.4 475.5 592.3 477.4 596.5C479.4 600.7 482.0 601.8 488.0 605.0C494.0 608.1 502.0 612.2 513.3 615.5C524.6 618.8 541.4 621.8 555.5 625.0C569.6 628.2 585.4 631.2 597.7 634.5C610.0 637.8 620.6 641.5 629.4 645.0C638.1 648.6 643.4 651.9 650.5 655.6C657.5 659.3 662.8 663.3 671.6 667.2C680.4 671.1 690.9 675.1 703.2 678.8C715.5 682.5 731.3 687.2 745.4 689.4C759.5 691.5 773.5 692.9 787.6 691.5C801.7 690.1 817.5 685.8 829.8 680.9C842.1 676.0 853.0 668.3 861.5 661.9C869.9 655.6 876.2 647.2 880.5 642.9C884.7 638.7 886.1 637.7 887.2 636.6" fill="none" stroke="#2e2e2e" stroke-width="1.55" stroke-linejoin="round" stroke-linecap="round"/>
<path d="M474.9 600.7C476.7 602.1 479.5 606.2 485.9 609.2C492.3 612.2 501.7 615.5 513.3 618.7C524.9 621.8 541.4 625.0 555.5 628.2C569.6 631.3 585.4 634.3 597.7 637.7C610.0 641.0 620.6 644.7 629.4 648.2C638.1 651.7 643.4 655.1 650.5 658.8C657.5 662.5 662.8 666.5 671.6 670.4C680.4 674.2 690.9 678.2 703.2 682.0C715.5 685.8 731.3 690.9 745.4 693.2C759.5 695.4 773.5 696.7 787.6 695.3C801.7 693.9 817.5 689.6 829.8 684.7C842.1 679.9 852.7 672.4 861.5 666.1C870.3 659.9 878.0 651.2 882.6 647.2C887.1 643.1 887.8 642.8 888.9 641.9" fill="none" stroke="#2e2e2e" stroke-width="1" stroke-linejoin="round" stroke-linecap="round"/>
<path d="M653.6 575.4C654.3 574.0 655.9 569.1 657.8 567.0C659.8 564.9 662.9 563.3 665.2 562.8C667.5 562.2 670.2 562.6 671.6 563.8C673.0 565.0 673.7 567.8 673.7 570.1C673.7 572.5 671.9 576.6 671.6 577.9M657.8 575.8C658.5 574.5 660.5 569.7 662.1 568.0C663.6 566.4 665.9 565.7 667.3 565.9C668.7 566.2 670.0 568.9 670.5 569.5" fill="none" stroke="#2e2e2e" stroke-width="1.55" stroke-linejoin="round" stroke-linecap="round"/>
<path d="M738.0 598.6C738.7 597.2 740.3 592.2 742.2 590.2C744.2 588.1 747.3 586.8 749.6 586.4C751.9 586.0 754.6 586.5 756.0 587.7C757.4 588.8 758.1 591.1 758.1 593.3C758.1 595.6 756.3 599.9 756.0 601.2M742.2 599.0C743.0 597.7 744.9 592.9 746.5 591.2C748.1 589.6 750.3 588.9 751.7 589.1C753.1 589.4 754.4 592.1 754.9 592.7" fill="none" stroke="#2e2e2e" stroke-width="1.55" stroke-linejoin="round" stroke-linecap="round"/>
<path d="M650.5 573.3C650.7 571.5 650.7 565.7 652.1 562.8C653.6 559.8 657.8 556.6 658.9 555.4M766.5 609.6C766.9 607.8 767.4 601.7 768.6 598.6C769.9 595.6 773.0 592.5 773.9 591.2" fill="none" stroke="#2e2e2e" stroke-width="1.55" stroke-linejoin="round" stroke-linecap="round"/>
<path d="M580.8 637.7C580.5 638.4 578.5 640.5 578.7 641.9C578.9 643.3 581.4 645.4 581.9 646.1L629.4 661.9C630.4 662.1 634.1 663.7 635.7 663.0C637.3 662.3 638.9 659.3 638.9 657.7C638.9 656.1 636.2 654.2 635.7 653.5C627.6 651.0 596.3 641.4 587.2 638.7C578.0 636.1 581.9 637.8 580.8 637.7" fill="none" stroke="#2e2e2e" stroke-width="1.6" stroke-linejoin="round" stroke-linecap="round"/>
<path d="M585.0 641.9C592.8 644.5 623.3 654.9 631.5 657.7C639.6 660.5 633.6 658.6 634.0 658.8" fill="none" stroke="#2e2e2e" stroke-width="1.2" stroke-linejoin="round" stroke-linecap="round"/>
<path d="M852.0 613.8C851.4 615.3 850.1 620.1 848.8 622.9C847.5 625.7 844.9 629.4 844.2 630.7C846.3 631.2 851.6 633.2 857.2 633.4C862.9 633.7 874.8 632.6 878.3 632.4" fill="none" stroke="#2e2e2e" stroke-width="1.55" stroke-linejoin="round" stroke-linecap="round"/>
<path d="M234.2 666.5C232.7 667.0 228.2 667.1 225.2 669.5C222.2 672.0 219.5 675.3 216.2 681.1C213.0 686.9 209.2 695.2 206.0 704.2C202.8 713.2 199.5 724.4 197.0 735.1C194.4 745.8 192.3 758.6 190.6 768.5C188.8 778.3 187.5 788.6 186.7 794.2C185.9 799.7 186.1 800.6 185.9 801.9C191.8 803.6 209.1 808.5 221.4 812.1C233.7 815.8 248.4 820.1 259.9 823.7C271.5 827.4 283.5 831.6 290.8 834.0C298.0 836.3 301.5 837.2 303.6 837.8L334.4 823.7C335.3 818.8 338.1 804.2 339.6 794.2C341.1 784.1 342.6 773.2 343.4 763.3C344.3 753.5 344.9 743.2 344.7 735.1C344.5 726.9 343.9 720.7 342.1 714.5C340.4 708.3 337.4 702.3 334.4 697.8C331.4 693.3 328.4 690.3 324.2 687.5C319.9 684.7 311.3 682.2 308.7 681.1C304.0 679.6 289.5 674.5 280.5 672.1C271.5 669.8 262.5 667.9 254.8 667.0C247.1 666.0 237.7 666.6 234.2 666.5" fill="#fff" stroke="#161616" stroke-width="2.7" stroke-linejoin="round" stroke-linecap="round"/>
<path d="M234.2 667.0C233.2 671.0 228.9 683.0 227.8 691.4C226.7 699.7 227.4 710.2 227.8 717.1C228.2 723.9 229.7 728.9 230.4 732.5C231.0 736.1 231.5 737.9 231.7 738.9C230.4 743.0 226.3 755.4 224.0 763.3C221.6 771.3 219.0 780.2 217.5 786.5C216.0 792.7 215.4 798.2 215.0 800.6" fill="none" stroke="#2e2e2e" stroke-width="1.55" stroke-linejoin="round" stroke-linecap="round"/>
<path d="M231.7 738.9L298.5 758.7" fill="none" stroke="#2e2e2e" stroke-width="1.55" stroke-linejoin="round" stroke-linecap="round"/>
<path d="M326.7 695.2C325.0 698.5 319.9 707.0 316.5 714.5C313.0 722.0 309.2 732.8 306.2 740.2C303.2 747.6 300.6 751.0 298.5 758.7C296.3 766.4 294.8 777.1 293.3 786.5C291.8 795.8 290.3 808.2 289.5 814.7C288.6 821.2 288.4 823.7 288.2 825.5" fill="none" stroke="#2e2e2e" stroke-width="1.55" stroke-linejoin="round" stroke-linecap="round"/>
<path d="M334.4 711.9C332.7 717.1 327.2 732.5 324.2 742.8C321.2 753.1 319.0 762.5 316.5 773.6C313.9 784.7 310.9 799.1 308.7 809.6C306.6 820.1 304.5 832.1 303.6 836.6" fill="none" stroke="#2e2e2e" stroke-width="1.55" stroke-linejoin="round" stroke-linecap="round"/>
<path d="M254.3 672.1C254.3 671.5 256.3 670.3 257.4 670.3C258.4 670.3 260.4 671.5 260.4 672.1C260.4 672.7 258.4 673.9 257.4 673.9C256.3 673.9 254.3 672.7 254.3 672.1Z" fill="none" stroke="#2e2e2e" stroke-width="1.55" stroke-linejoin="round" stroke-linecap="round"/>
<path d="M298.0 683.2C298.0 682.6 300.0 681.4 301.0 681.4C302.1 681.4 304.1 682.6 304.1 683.2C304.1 683.8 302.1 685.0 301.0 685.0C300.0 685.0 298.0 683.8 298.0 683.2Z" fill="none" stroke="#2e2e2e" stroke-width="1.55" stroke-linejoin="round" stroke-linecap="round"/>
<path d="M217.5 821.9L186.7 837.8C186.9 840.4 186.9 848.1 188.0 853.3C189.1 858.4 190.6 864.6 193.1 868.7C195.7 872.7 200.2 875.7 203.4 877.7C206.6 879.6 210.9 879.8 212.4 880.2C218.2 881.9 234.9 886.4 247.1 890.5C259.3 894.6 276.2 901.4 285.6 904.6C295.0 907.9 300.6 908.9 303.6 909.8C305.7 909.4 312.6 908.9 316.5 907.2C320.3 905.5 324.2 902.9 326.7 899.5C329.3 896.1 330.6 891.4 331.9 886.7C333.2 881.9 333.8 875.7 334.4 871.2C335.1 866.7 335.5 861.6 335.7 859.7L217.5 821.9" fill="#fff" stroke="#161616" stroke-width="2.7" stroke-linejoin="round" stroke-linecap="round"/>
<path d="M186.7 837.8L213.7 840.9C226.1 844.7 273.2 858.5 288.2 863.5C303.2 868.6 301.0 870.0 303.6 871.2L335.7 859.7M303.6 871.2L303.1 909.8" fill="none" stroke="#2e2e2e" stroke-width="1.55" stroke-linejoin="round" stroke-linecap="round"/>
<path d="M213.7 840.9C213.3 843.8 210.9 852.1 211.1 858.4C211.3 864.7 214.3 875.5 215.0 879.0M288.2 863.5C288.0 867.0 286.5 877.2 286.9 884.1C287.3 890.9 290.1 901.2 290.8 904.6" fill="none" stroke="#2e2e2e" stroke-width="1.55" stroke-linejoin="round" stroke-linecap="round"/>
<path d="M384.8 825.9 L374.3 834.3" stroke="#161616" stroke-width="6.4" stroke-linecap="round" fill="none"/>
<path d="M384.8 825.9 L374.3 834.3" stroke="#fff" stroke-width="2.2" stroke-linecap="round" fill="none"/>
<path d="M381.3 828.7 L377.3 831.9" stroke="#333" stroke-width="2.2" stroke-dasharray="1.1 1.6" fill="none"/>
<ellipse cx="384.8" cy="825.9" rx="3.4" ry="6" transform="rotate(-38.5 384.8 825.9)" fill="#fff" stroke="#161616" stroke-width="2.6"/>
<ellipse cx="385.4" cy="825.4" rx="1.2" ry="3.4" transform="rotate(-38.5 385.4 825.4)" fill="none" stroke="#555" stroke-width="1"/>
<path d="M488.0 681.6C486.2 682.2 480.0 682.9 477.0 685.1C474.1 687.3 472.0 690.9 470.2 694.8C468.3 698.7 466.8 704.4 466.0 708.5C465.3 712.6 465.0 716.8 465.5 719.5C465.9 722.3 468.2 724.1 468.8 725.0C472.9 726.2 485.8 729.9 493.5 731.9C501.3 733.9 511.9 736.0 515.6 736.9C516.5 736.5 519.5 736.4 521.1 734.7C522.7 732.9 523.8 728.7 525.2 726.4C526.6 724.1 528.6 721.8 529.3 720.9C530.7 721.4 535.5 723.2 537.6 723.7C539.6 724.1 540.7 724.6 541.7 723.7C542.7 722.7 543.4 720.7 543.6 718.1C543.9 715.6 544.1 712.0 543.1 708.5C542.1 705.1 539.9 700.3 537.6 697.5C535.3 694.8 532.5 693.6 529.3 692.0C526.1 690.4 520.1 688.6 518.3 687.9L488.0 681.6" fill="#fff" stroke="#161616" stroke-width="2.7" stroke-linejoin="round" stroke-linecap="round"/>
<path d="M525.2 726.4C525.6 724.8 526.3 719.3 527.9 716.8C529.5 714.3 532.8 711.5 534.8 711.3C536.9 711.0 539.0 713.5 540.3 715.4C541.6 717.3 542.2 721.6 542.5 722.8" fill="none" stroke="#2e2e2e" stroke-width="1.55" stroke-linejoin="round" stroke-linecap="round"/>
<path d="M521.1 696.1C520.6 698.7 519.0 706.5 518.3 711.3C517.6 716.1 516.9 720.9 516.9 725.0C516.9 729.2 518.1 734.2 518.3 736.0" fill="none" stroke="#2e2e2e" stroke-width="1.55" stroke-linejoin="round" stroke-linecap="round"/>
<path d="M459.2 739.3C457.6 739.9 453.0 740.3 449.5 742.9C446.1 745.6 442.2 749.1 438.5 755.3C434.9 761.5 431.0 770.4 427.5 780.1C424.1 789.7 420.4 801.6 417.9 813.1C415.4 824.5 413.5 837.8 412.4 848.8C411.2 859.8 410.5 870.9 411.0 879.1C411.5 887.4 412.8 892.9 415.1 898.4C417.4 903.9 421.3 908.7 424.8 912.1C428.2 915.6 433.9 917.9 435.8 919.0C441.3 920.8 457.3 926.1 468.8 930.0C480.2 933.9 495.4 939.4 504.6 942.4C513.7 945.4 520.6 947.0 523.8 947.9C526.1 947.4 533.2 946.7 537.6 945.1C541.9 943.5 546.7 941.5 550.0 938.3C553.2 935.1 555.7 927.9 556.8 925.9C557.5 920.8 559.6 906.2 561.0 895.6C562.3 885.1 564.2 873.6 565.1 862.6C566.0 851.6 566.5 839.7 566.5 829.6C566.5 819.5 566.0 810.3 565.1 802.1C564.2 793.8 563.0 786.0 561.0 780.1C558.9 774.1 556.1 770.0 552.7 766.3C549.3 762.6 542.4 759.4 540.3 758.0C535.3 756.4 519.7 751.1 510.1 748.4C500.4 745.8 491.0 743.6 482.5 742.1C474.1 740.6 463.1 739.8 459.2 739.3" fill="#fff" stroke="#161616" stroke-width="2.7" stroke-linejoin="round" stroke-linecap="round"/>
<path d="M455.0 741.0C454.1 744.3 450.4 753.4 449.5 760.8C448.6 768.2 448.8 778.2 449.5 785.6C450.2 792.9 452.7 800.5 453.7 804.8C454.6 809.2 454.8 810.6 455.0 811.7C453.7 816.1 449.5 828.0 446.8 837.8C444.0 847.7 440.6 860.8 438.5 870.9C436.5 880.9 434.9 890.8 434.4 898.4C433.9 905.9 435.5 913.3 435.8 916.3" fill="none" stroke="#2e2e2e" stroke-width="1.55" stroke-linejoin="round" stroke-linecap="round"/>
<path d="M455.0 811.7L519.7 832.3" fill="none" stroke="#2e2e2e" stroke-width="1.55" stroke-linejoin="round" stroke-linecap="round"/>
<path d="M547.2 764.9C545.6 768.4 541.0 777.5 537.6 785.6C534.1 793.6 529.5 805.3 526.6 813.1C523.6 820.9 521.8 824.1 519.7 832.3C517.6 840.6 515.8 851.6 514.2 862.6C512.6 873.6 510.5 886.9 510.1 898.4C509.6 909.8 510.7 924.0 511.4 931.4C512.1 938.8 513.7 941.0 514.2 942.9" fill="none" stroke="#2e2e2e" stroke-width="1.55" stroke-linejoin="round" stroke-linecap="round"/>
<path d="M555.5 780.1C554.3 785.6 550.6 801.2 548.6 813.1C546.5 825.0 544.9 838.8 543.1 851.6C541.2 864.4 539.9 877.3 537.6 890.1C535.3 903.0 531.4 919.2 529.3 928.6C527.3 938.0 525.9 943.5 525.2 946.5" fill="none" stroke="#2e2e2e" stroke-width="1.55" stroke-linejoin="round" stroke-linecap="round"/>
<path d="M475.7 744.3C475.7 743.6 477.9 742.4 479.0 742.4C480.1 742.4 482.3 743.6 482.3 744.3C482.3 744.9 480.1 746.2 479.0 746.2C477.9 746.2 475.7 744.9 475.7 744.3Z" fill="none" stroke="#2e2e2e" stroke-width="1.55" stroke-linejoin="round" stroke-linecap="round"/>
<path d="M519.1 755.8C519.1 755.2 521.3 753.9 522.4 753.9C523.5 753.9 525.7 755.2 525.7 755.8C525.7 756.5 523.5 757.8 522.4 757.8C521.3 757.8 519.1 756.5 519.1 755.8Z" fill="none" stroke="#2e2e2e" stroke-width="1.55" stroke-linejoin="round" stroke-linecap="round"/>
<path d="M610.5 825.5C610.9 825.0 612.0 823.3 613.2 822.7C614.5 822.2 617.1 822.2 617.9 822.2L665.5 835.9C666.3 836.3 669.5 836.9 670.5 838.4C671.4 839.9 670.9 843.7 671.0 844.7C670.6 852.3 670.0 872.0 668.3 890.1C666.6 908.2 662.1 942.8 660.8 953.4C660.5 954.2 660.0 957.5 658.6 958.3C657.3 959.2 653.6 958.3 652.6 958.3L624.2 946.0C621.6 929.3 610.9 866.2 608.6 846.1C606.3 826.0 610.2 828.9 610.5 825.5" fill="#fff" stroke="#161616" stroke-width="2.8" stroke-linejoin="round" stroke-linecap="round"/>
<path d="M581.6 841.1C582.0 840.7 582.6 838.8 583.8 838.4C584.9 837.9 587.7 838.4 588.5 838.4L627.8 853.2C628.6 853.7 631.9 854.4 632.8 856.0C633.7 857.6 633.2 861.5 633.3 862.6C633.0 867.2 632.5 876.4 631.1 890.1C629.7 903.9 625.8 936.0 624.8 945.1C624.6 946.0 624.4 949.3 623.4 950.1C622.4 950.9 619.5 950.1 618.7 950.1L576.1 931.9C575.3 931.5 572.1 930.7 571.1 929.2C570.2 927.7 570.7 924.1 570.6 923.1C571.0 919.0 572.2 907.5 573.3 898.4C574.5 889.2 576.1 877.6 577.5 868.1C578.8 858.6 580.9 845.6 581.6 841.1" fill="#fff" stroke="#161616" stroke-width="2.8" stroke-linejoin="round" stroke-linecap="round"/>
<path d="M584.9 843.9L628.9 859.3L621.2 945.1L575.0 927.3L584.9 843.9" fill="none" stroke="#2e2e2e" stroke-width="1.1" stroke-linejoin="round" stroke-linecap="round"/>
<path d="M586.5 845.5L576.6 925.9" stroke="#3a3a3a" stroke-width="1.45" fill="none"/>
<path d="M589.5 846.6L579.7 927.1" stroke="#3a3a3a" stroke-width="1.45" fill="none"/>
<path d="M592.4 847.6L582.8 928.4" stroke="#3a3a3a" stroke-width="1.45" fill="none"/>
<path d="M595.3 848.6L585.8 929.6" stroke="#3a3a3a" stroke-width="1.45" fill="none"/>
<path d="M598.2 849.6L588.9 930.8" stroke="#3a3a3a" stroke-width="1.45" fill="none"/>
<path d="M601.1 850.7L592.0 932.1" stroke="#3a3a3a" stroke-width="1.45" fill="none"/>
<path d="M604.0 851.7L595.0 933.3" stroke="#3a3a3a" stroke-width="1.45" fill="none"/>
<path d="M606.9 852.7L598.1 934.5" stroke="#3a3a3a" stroke-width="1.45" fill="none"/>
<path d="M609.8 853.7L601.2 935.8" stroke="#3a3a3a" stroke-width="1.45" fill="none"/>
<path d="M612.7 854.7L604.2 937.0" stroke="#3a3a3a" stroke-width="1.45" fill="none"/>
<path d="M615.6 855.8L607.3 938.3" stroke="#3a3a3a" stroke-width="1.45" fill="none"/>
<path d="M618.5 856.8L610.4 939.5" stroke="#3a3a3a" stroke-width="1.45" fill="none"/>
<path d="M621.5 857.8L613.4 940.7" stroke="#3a3a3a" stroke-width="1.45" fill="none"/>
<path d="M624.4 858.8L616.5 942.0" stroke="#3a3a3a" stroke-width="1.45" fill="none"/>
<path d="M627.3 859.8L619.6 943.2" stroke="#3a3a3a" stroke-width="1.45" fill="none"/>
<path d="M571.1 931.4C570.7 933.2 568.7 938.7 568.4 942.4C568.1 946.1 569.9 950.6 569.5 953.4C569.0 956.1 566.3 958.0 565.6 958.9" fill="none" stroke="#2e2e2e" stroke-width="1.2" stroke-linejoin="round" stroke-linecap="round"/>
<path d="M562.3 961.7C562.5 960.3 565.8 957.8 567.3 957.8C568.8 957.8 571.3 960.3 571.1 961.7C571.0 963.0 567.7 966.1 566.2 966.1C564.7 966.1 562.2 963.0 562.3 961.7Z" fill="#fff" stroke="#161616" stroke-width="1.6" stroke-linejoin="round" stroke-linecap="round"/>
<path d="M292.5 990.4C293.1 988.5 294.1 982.6 296.1 978.7C298.2 974.8 301.3 970.9 304.9 967.0C308.6 963.0 313.0 958.9 318.2 955.2C323.3 951.6 329.9 947.6 335.8 944.9C341.6 942.3 347.5 940.3 353.4 939.1C359.2 937.9 365.6 938.2 371.0 937.6C376.4 937.0 381.5 936.2 385.7 935.4C389.8 934.6 393.0 933.4 395.9 932.9C398.9 932.4 401.1 931.9 403.3 932.5C405.5 933.0 407.2 934.9 409.1 936.1C411.1 937.4 412.6 939.3 415.0 939.8C417.5 940.3 420.9 939.4 423.8 939.1C426.8 938.7 430.2 937.7 432.6 937.6C435.1 937.5 437.5 938.2 438.5 938.3L444.4 933.9L532.4 963.3L528.4 971.1C527.5 970.9 523.7 968.6 522.9 969.9C522.1 971.2 524.0 976.3 523.6 978.7C523.2 981.1 522.4 982.9 520.7 984.6C519.0 986.3 515.3 987.9 513.3 989.0C511.3 990.0 509.1 989.5 508.6 990.7C508.1 992.0 509.4 994.4 510.4 996.3C511.4 998.2 514.0 999.2 514.8 1002.2C515.6 1005.1 515.0 1012.0 515.1 1013.9C511.4 1015.9 501.4 1021.0 492.8 1025.7C484.2 1030.3 473.2 1037.2 463.4 1041.8C453.7 1046.5 442.6 1050.7 434.1 1053.5C425.5 1056.4 417.7 1057.7 412.1 1058.7C406.5 1059.7 404.7 1059.7 400.3 1059.4C395.9 1059.2 391.0 1058.7 385.7 1057.2C380.3 1055.7 374.7 1053.7 368.1 1050.6C361.4 1047.6 353.4 1043.3 346.0 1038.9C338.7 1034.5 330.6 1029.1 324.0 1024.2C317.4 1019.3 311.1 1013.9 306.4 1009.5C301.8 1005.1 298.5 1001.0 296.1 997.8C293.8 994.6 293.1 991.7 292.5 990.4" fill="#fff" stroke="#161616" stroke-width="2.7" stroke-linejoin="round" stroke-linecap="round"/>
<path d="M441.0 939.1L527.3 968.7" fill="none" stroke="#2e2e2e" stroke-width="1.55" stroke-linejoin="round" stroke-linecap="round"/>
<path d="M441.0 939.1C439.8 939.6 436.5 940.8 434.1 942.3C431.7 943.8 428.0 947.0 426.8 947.9L484.7 969.2C488.0 968.8 500.4 967.0 504.5 967.0C508.6 966.9 508.4 968.4 509.2 968.7" fill="none" stroke="#2e2e2e" stroke-width="1.55" stroke-linejoin="round" stroke-linecap="round"/>
<path d="M426.8 947.9C424.3 948.5 419.4 948.9 412.1 951.6C404.7 954.2 391.8 959.7 382.7 964.0C373.7 968.3 363.2 974.8 357.8 977.2C352.4 979.7 354.8 977.2 350.4 978.7C346.0 980.2 337.0 983.6 331.4 986.0C325.7 988.5 320.0 991.4 316.7 993.4C313.4 995.4 312.4 997.3 311.6 998.1" fill="none" stroke="#2e2e2e" stroke-width="1.55" stroke-linejoin="round" stroke-linecap="round"/>
<path d="M357.8 977.2L419.4 1000.0" fill="none" stroke="#2e2e2e" stroke-width="1.55" stroke-linejoin="round" stroke-linecap="round"/>
<path d="M484.7 969.2C481.2 970.3 471.9 972.2 463.4 975.8C455.0 979.3 441.4 986.4 434.1 990.4C426.8 994.5 423.1 996.6 419.4 1000.0C415.7 1003.4 414.5 1006.7 412.1 1011.0C409.6 1015.3 406.7 1021.5 404.7 1025.7C402.8 1029.9 401.1 1034.5 400.3 1036.2" fill="none" stroke="#2e2e2e" stroke-width="1.55" stroke-linejoin="round" stroke-linecap="round"/>
<path d="M293.9 990.4C294.6 991.4 295.0 994.1 297.6 996.3C300.2 998.5 302.5 1000.2 309.4 1003.6C316.2 1007.1 328.9 1012.9 338.7 1016.9C348.5 1020.8 358.3 1023.9 368.1 1027.1C377.8 1030.3 392.5 1034.5 397.4 1035.9C398.1 1035.4 396.9 1036.7 401.8 1033.0C406.7 1029.3 417.7 1020.3 426.8 1013.9C435.8 1007.6 446.3 1001.0 456.1 994.8C465.9 988.7 477.0 981.7 485.5 977.2C493.9 972.8 503.2 969.7 506.7 968.1" fill="none" stroke="#2e2e2e" stroke-width="1.55" stroke-linejoin="round" stroke-linecap="round"/>
<path d="M295.4 987.8C296.1 988.9 297.2 991.9 299.8 994.1C302.4 996.3 304.1 997.8 310.8 1001.2C317.5 1004.5 330.4 1010.4 340.2 1014.4C350.0 1018.3 360.1 1021.5 369.5 1024.6C378.9 1027.7 392.1 1031.6 396.7 1033.0C397.3 1032.6 395.9 1033.9 400.6 1030.4C405.4 1026.8 416.3 1018.0 425.3 1011.7C434.3 1005.4 444.8 998.8 454.6 992.6C464.4 986.5 475.9 979.3 484.0 975.0C492.1 970.8 499.9 968.5 503.1 967.3" fill="none" stroke="#2e2e2e" stroke-width="1.1" stroke-linejoin="round" stroke-linecap="round"/>
<path d="M305.7 1003.9C305.9 1005.6 306.2 1011.2 307.1 1013.9C308.1 1016.7 310.5 1019.4 311.1 1020.5M307.6 1009.8C312.8 1012.5 327.6 1021.1 338.7 1025.7C349.8 1030.3 368.1 1035.4 373.9 1037.4M373.9 1034.8C374.4 1036.4 374.8 1041.3 376.9 1044.7C378.9 1048.2 384.4 1053.5 386.0 1055.3M398.9 1037.4C399.4 1039.1 400.0 1044.7 401.8 1047.7C403.6 1050.7 408.2 1054.0 409.4 1055.3" fill="none" stroke="#2e2e2e" stroke-width="1.55" stroke-linejoin="round" stroke-linecap="round"/>
<path d="M508.6 990.7C508.3 989.8 506.7 986.8 506.7 985.3C506.8 983.8 508.6 982.2 508.9 981.6" fill="none" stroke="#2e2e2e" stroke-width="1.55" stroke-linejoin="round" stroke-linecap="round"/>
<path d="M526.1 1090.9L587.7 1048.7L588.8 1046.4L586.8 1044.3L540.0 1026.6L537.6 1026.9L467.7 1068.7L467.0 1070.6L469.2 1072.8L512.3 1090.9" fill="#fff" stroke="#161616" stroke-width="2.6" stroke-linejoin="round" stroke-linecap="round"/>
<path d="M473.8 1070.7L540.0 1030.6" stroke="#3a3a3a" stroke-width="0.95" fill="none"/>
<path d="M475.6 1071.5L541.8 1031.3" stroke="#3a3a3a" stroke-width="0.95" fill="none"/>
<path d="M477.5 1072.3L543.6 1032.0" stroke="#3a3a3a" stroke-width="0.95" fill="none"/>
<path d="M479.4 1073.1L545.4 1032.7" stroke="#3a3a3a" stroke-width="0.95" fill="none"/>
<path d="M481.3 1073.9L547.2 1033.4" stroke="#3a3a3a" stroke-width="0.95" fill="none"/>
<path d="M483.1 1074.7L549.0 1034.1" stroke="#3a3a3a" stroke-width="0.95" fill="none"/>
<path d="M485.0 1075.5L550.8 1034.9" stroke="#3a3a3a" stroke-width="0.95" fill="none"/>
<path d="M486.9 1076.3L552.6 1035.6" stroke="#3a3a3a" stroke-width="0.95" fill="none"/>
<path d="M488.8 1077.1L554.4 1036.3" stroke="#3a3a3a" stroke-width="0.95" fill="none"/>
<path d="M490.6 1077.9L556.2 1037.0" stroke="#3a3a3a" stroke-width="0.95" fill="none"/>
<path d="M492.5 1078.7L557.9 1037.7" stroke="#3a3a3a" stroke-width="0.95" fill="none"/>
<path d="M494.4 1079.5L559.7 1038.4" stroke="#3a3a3a" stroke-width="0.95" fill="none"/>
<path d="M496.3 1080.3L561.5 1039.2" stroke="#3a3a3a" stroke-width="0.95" fill="none"/>
<path d="M498.1 1081.1L563.3 1039.9" stroke="#3a3a3a" stroke-width="0.95" fill="none"/>
<path d="M500.0 1081.9L565.1 1040.6" stroke="#3a3a3a" stroke-width="0.95" fill="none"/>
<path d="M501.9 1082.7L566.9 1041.3" stroke="#3a3a3a" stroke-width="0.95" fill="none"/>
<path d="M503.8 1083.5L568.7 1042.0" stroke="#3a3a3a" stroke-width="0.95" fill="none"/>
<path d="M505.6 1084.3L570.5 1042.8" stroke="#3a3a3a" stroke-width="0.95" fill="none"/>
<path d="M507.5 1085.1L572.3 1043.5" stroke="#3a3a3a" stroke-width="0.95" fill="none"/>
<path d="M509.4 1085.9L574.1 1044.2" stroke="#3a3a3a" stroke-width="0.95" fill="none"/>
<path d="M511.3 1086.7L575.9 1044.9" stroke="#3a3a3a" stroke-width="0.95" fill="none"/>
<path d="M513.1 1087.5L577.7 1045.6" stroke="#3a3a3a" stroke-width="0.95" fill="none"/>
<path d="M515.0 1088.3L579.5 1046.3" stroke="#3a3a3a" stroke-width="0.95" fill="none"/>
<path d="M516.9 1089.1L581.3 1047.1" stroke="#3a3a3a" stroke-width="0.95" fill="none"/>
<path d="M540.7 1026.2C541.1 1024.8 542.4 1020.4 543.0 1017.5C543.6 1014.7 543.6 1011.2 544.4 1009.3C545.2 1007.3 547.3 1006.4 547.9 1005.8" fill="none" stroke="#2e2e2e" stroke-width="1.8" stroke-linejoin="round" stroke-linecap="round"/>
<path d="M545.8 1001.0C545.9 999.6 546.9 997.1 548.1 996.0C549.2 994.8 551.3 994.1 552.7 994.1C554.0 994.1 555.6 995.0 556.3 996.0C557.1 997.0 557.6 998.6 557.2 1000.1C556.9 1001.6 555.6 1004.0 554.5 1005.1C553.4 1006.3 552.0 1007.0 550.8 1007.0C549.6 1006.9 548.0 1005.7 547.2 1004.7C546.3 1003.7 545.6 1002.5 545.8 1001.0Z" fill="#fff" stroke="#161616" stroke-width="2.2" stroke-linejoin="round" stroke-linecap="round"/>
<path d="M549.4 999.6C549.8 998.8 551.9 997.3 552.7 997.3C553.4 997.3 554.3 998.8 554.0 999.6C553.7 1000.5 551.6 1002.4 550.8 1002.4C550.1 1002.4 549.1 1000.5 549.4 999.6Z" fill="none" stroke="#2e2e2e" stroke-width="1.2" stroke-linejoin="round" stroke-linecap="round"/>
<path d="M249.4 1023.6 L238.9 1032.0" stroke="#161616" stroke-width="6.4" stroke-linecap="round" fill="none"/>
<path d="M249.4 1023.6 L238.9 1032.0" stroke="#fff" stroke-width="2.2" stroke-linecap="round" fill="none"/>
<path d="M245.9 1026.4 L241.9 1029.6" stroke="#333" stroke-width="2.2" stroke-dasharray="1.1 1.6" fill="none"/>
<ellipse cx="249.4" cy="1023.6" rx="3.4" ry="6" transform="rotate(-38.5 249.4 1023.6)" fill="#fff" stroke="#161616" stroke-width="2.6"/>
<ellipse cx="250.0" cy="1023.1" rx="1.2" ry="3.4" transform="rotate(-38.5 250.0 1023.1)" fill="none" stroke="#555" stroke-width="1"/>
<path d="M787.9 830.3C788.1 829.8 788.0 827.7 788.8 827.0C789.6 826.3 792.0 826.3 792.6 826.2L891.1 859.2C891.8 860.4 893.9 862.7 895.3 866.1C896.6 869.5 898.0 875.3 899.4 879.9C900.8 884.4 903.0 889.7 903.5 893.6C904.0 897.5 903.7 900.9 902.1 903.2C900.5 905.5 895.3 906.7 893.9 907.4C887.0 905.3 865.9 899.1 852.6 895.0C839.3 890.9 820.5 884.7 814.1 882.6C812.7 881.7 808.1 879.9 805.8 877.1C803.5 874.4 802.2 870.2 800.3 866.1C798.5 862.0 796.7 856.9 794.8 852.3C793.0 847.8 790.5 842.2 789.3 838.6C788.2 834.9 788.2 831.7 787.9 830.3" fill="#fff" stroke="#161616" stroke-width="2.8" stroke-linejoin="round" stroke-linecap="round"/>
<path d="M796.2 835.8L887.8 865.0C888.6 867.5 891.3 875.1 892.5 879.9C893.7 884.6 895.5 890.2 895.3 893.6C895.0 897.1 891.8 899.3 891.1 900.5C884.7 898.4 864.8 892.0 852.6 888.1C840.5 884.2 823.9 878.9 818.2 877.1C816.8 876.2 812.5 874.8 810.0 871.6C807.4 868.4 805.4 863.8 803.1 857.8C800.8 851.9 797.3 839.5 796.2 835.8" fill="none" stroke="#2e2e2e" stroke-width="2.1" stroke-linejoin="round" stroke-linecap="round"/>
<path d="M792.6 829.0L796.2 835.8M891.1 860.0L887.8 865.0M898.8 901.9L891.7 900.5M808.6 879.9L810.8 872.1M849.9 894.2L851.2 888.7M893.9 879.9L899.4 879.9M797.6 849.6L801.7 848.2" fill="none" stroke="#2e2e2e" stroke-width="1.2" stroke-linejoin="round" stroke-linecap="round"/>
<path d="M848.5 781.3C848.8 783.6 849.4 789.1 850.4 794.6C851.4 800.0 852.9 808.3 854.3 813.8C855.6 819.3 856.6 824.0 858.7 827.6C860.7 831.2 865.1 834.0 866.4 835.3C873.2 837.4 894.8 844.5 907.6 848.2C920.5 852.0 937.4 856.2 943.4 857.8C944.8 857.8 949.3 858.4 951.7 857.3C954.0 856.1 956.8 854.1 957.7 851.0C958.6 847.8 957.9 842.9 957.2 838.6C956.4 834.2 954.6 829.0 953.0 824.8C951.5 820.6 948.7 815.2 947.8 813.3" fill="none" stroke="#161616" stroke-width="6" stroke-linecap="round" stroke-linejoin="round"/>
<path d="M848.5 781.3C848.8 783.6 849.4 789.1 850.4 794.6C851.4 800.0 852.9 808.3 854.3 813.8C855.6 819.3 856.6 824.0 858.7 827.6C860.7 831.2 865.1 834.0 866.4 835.3C873.2 837.4 894.8 844.5 907.6 848.2C920.5 852.0 937.4 856.2 943.4 857.8C944.8 857.8 949.3 858.4 951.7 857.3C954.0 856.1 956.8 854.1 957.7 851.0C958.6 847.8 957.9 842.9 957.2 838.6C956.4 834.2 954.6 829.0 953.0 824.8C951.5 820.6 948.7 815.2 947.8 813.3" fill="none" stroke="#fff" stroke-width="1.7" stroke-linecap="round" stroke-linejoin="round"/>
<path d="M880.1 840.8L907.6 849.6M909.0 846.8L943.4 856.2" fill="none" stroke="#2e2e2e" stroke-width="1" stroke-linejoin="round" stroke-linecap="round"/>
<path d="M876.0 764.8 L865.5 773.2" stroke="#161616" stroke-width="6.4" stroke-linecap="round" fill="none"/>
<path d="M876.0 764.8 L865.5 773.2" stroke="#fff" stroke-width="2.2" stroke-linecap="round" fill="none"/>
<path d="M872.5 767.6 L868.5 770.8" stroke="#333" stroke-width="2.2" stroke-dasharray="1.1 1.6" fill="none"/>
<ellipse cx="876.0" cy="764.8" rx="3.4" ry="6" transform="rotate(-38.5 876.0 764.8)" fill="#fff" stroke="#161616" stroke-width="2.6"/>
<ellipse cx="876.6" cy="764.3" rx="1.2" ry="3.4" transform="rotate(-38.5 876.6 764.3)" fill="none" stroke="#555" stroke-width="1"/>
<path d="M679.3 900.5L712.3 882.6L712.3 885.9L679.3 900.5" fill="#161616" stroke="#161616" stroke-width="1"/>
<path d="M679.3 900.5L771.4 852.3M679.3 900.5L778.3 864.7" fill="none" stroke="#161616" stroke-width="2.2" stroke-linejoin="round" stroke-linecap="round"/>
<path d="M283.7 464.8C285.0 463.7 288.5 459.2 292.0 458.3C295.5 457.5 300.6 458.1 304.8 459.6C309.1 461.1 313.3 464.1 317.7 467.3C322.1 470.5 328.9 477.0 331.2 478.9" fill="none" stroke="#2e2e2e" stroke-width="1.55" stroke-linejoin="round" stroke-linecap="round"/>
<path d="M396.0 495.6C397.3 493.7 400.5 486.8 403.7 484.0C406.9 481.2 412.7 477.6 415.3 478.9C417.9 480.2 418.1 487.6 419.1 491.7C420.2 495.8 421.3 501.6 421.7 503.5" fill="none" stroke="#2e2e2e" stroke-width="1.55" stroke-linejoin="round" stroke-linecap="round"/>
<path d="M181.6 417.2C184.6 419.6 193.5 426.0 199.5 431.4C205.5 436.7 214.5 446.4 217.5 449.3" fill="none" stroke="#2e2e2e" stroke-width="1.55" stroke-linejoin="round" stroke-linecap="round"/>
<path d="M370 214.5 L345 214.5" stroke="#333" stroke-width="1.4" fill="none"/><circle cx="345" cy="214.5" r="2.3" fill="#111"/>
<path d="M498 214.5 L472.5 214.5" stroke="#333" stroke-width="1.4" fill="none"/><circle cx="472.5" cy="214.5" r="2.3" fill="#111"/>
<path d="M375 267.5 L355.7 284.3" stroke="#333" stroke-width="1.4" fill="none"/><circle cx="355.7" cy="284.3" r="2.3" fill="#111"/>
<path d="M508.5 312 L536 312" stroke="#333" stroke-width="1.4" fill="none"/><circle cx="536" cy="312" r="2.3" fill="#111"/>
<path d="M505 400 L540 400" stroke="#333" stroke-width="1.4" fill="none"/><circle cx="540" cy="400" r="2.3" fill="#111"/>
<path d="M428 591.5 L464 591.5" stroke="#333" stroke-width="1.4" fill="none"/><circle cx="464" cy="591.5" r="2.3" fill="#111"/>
<path d="M768 308 L747 324" stroke="#333" stroke-width="1.4" fill="none"/><circle cx="747" cy="324" r="2.3" fill="#111"/>
<path d="M857 318 L833 340" stroke="#333" stroke-width="1.4" fill="none"/><circle cx="833" cy="340" r="2.3" fill="#111"/>
<path d="M664 372 L664 402" stroke="#333" stroke-width="1.4" fill="none"/><circle cx="664" cy="402" r="2.3" fill="#111"/>
<path d="M862 398 L840 417" stroke="#333" stroke-width="1.4" fill="none"/><circle cx="840" cy="417" r="2.3" fill="#111"/>
<path d="M907 413 L907 433" stroke="#333" stroke-width="1.4" fill="none"/><circle cx="907" cy="433" r="2.3" fill="#111"/>
<path d="M281.5 636 L281.5 668" stroke="#333" stroke-width="1.4" fill="none"/><circle cx="281.5" cy="668" r="2.3" fill="#111"/>
<path d="M587 713 L553 713" stroke="#333" stroke-width="1.4" fill="none"/><circle cx="553" cy="713" r="2.3" fill="#111"/>
<path d="M383.4 784.4 L383.4 814" stroke="#333" stroke-width="1.4" fill="none"/><circle cx="383.4" cy="814" r="2.3" fill="#111"/>
<path d="M592 801.5 L592 833" stroke="#333" stroke-width="1.4" fill="none"/><circle cx="592" cy="833" r="2.3" fill="#111"/>
<path d="M371.3 884 L404 885" stroke="#333" stroke-width="1.4" fill="none"/><circle cx="404" cy="885" r="2.3" fill="#111"/>
<path d="M249 928 L249 898" stroke="#333" stroke-width="1.4" fill="none"/><circle cx="249" cy="898" r="2.3" fill="#111"/>
<path d="M257 990 L287 991" stroke="#333" stroke-width="1.4" fill="none"/><circle cx="287" cy="991" r="2.3" fill="#111"/>
<path d="M627.6 1047 L597 1047" stroke="#333" stroke-width="1.4" fill="none"/><circle cx="597" cy="1047" r="2.3" fill="#111"/>
<path d="M251 1056 L251 1040" stroke="#333" stroke-width="1.4" fill="none"/><circle cx="251" cy="1040" r="2.3" fill="#111"/>
<path d="M874 725 L874 752.7" stroke="#333" stroke-width="1.4" fill="none"/><circle cx="874" cy="752.7" r="2.3" fill="#111"/>
<path d="M710.6 919 L671 918" stroke="#333" stroke-width="1.4" fill="none"/><circle cx="671" cy="918" r="2.3" fill="#111"/>
<path d="M937.8 902.5 L937.8 865" stroke="#333" stroke-width="1.4" fill="none"/><circle cx="937.8" cy="865" r="2.3" fill="#111"/>
<path d="M868 944.5 L868.4 908.8" stroke="#333" stroke-width="1.4" fill="none"/><circle cx="868.4" cy="908.8" r="2.3" fill="#111"/>
<rect x="381" y="238" width="70.5" height="54.5" fill="#d6d6fb" style="mix-blend-mode:multiply"/>
<rect x="652" y="238" width="70.5" height="54.5" fill="#d6d6fb" style="mix-blend-mode:multiply"/>
<rect x="381" y="322.5" width="71" height="55" fill="#d6d6fb" style="mix-blend-mode:multiply"/>
<rect x="607" y="446.5" width="70.5" height="55" fill="#d6d6fb" style="mix-blend-mode:multiply"/>
<rect x="973" y="544" width="70.5" height="55" fill="#d6d6fb" style="mix-blend-mode:multiply"/>
<rect x="629" y="633" width="42" height="54.5" fill="#d6d6fb" style="mix-blend-mode:multiply"/>
<rect x="464" y="1042" width="43" height="48" fill="#d6d6fb" style="mix-blend-mode:multiply"/>
<text transform="translate(386.3 223.4) scale(0.94 1)" text-anchor="middle" font-size="27" fill="#17175c" stroke="#17175c" stroke-width="0.45">14</text>
<text transform="translate(514.1 223.4) scale(0.94 1)" text-anchor="middle" font-size="27" fill="#17175c" stroke="#17175c" stroke-width="0.45">15</text>
<text transform="translate(386.3 263.3) scale(0.94 1)" text-anchor="middle" font-size="27" fill="#17175c" stroke="#17175c" stroke-width="0.45">13</text>
<text transform="translate(492.6 320.4) scale(0.94 1)" text-anchor="middle" font-size="27" fill="#17175c" stroke="#17175c" stroke-width="0.45">10</text>
<text transform="translate(496.1 408.0) scale(0.94 1)" text-anchor="middle" font-size="27" fill="#17175c" stroke="#17175c" stroke-width="0.45">7</text>
<text transform="translate(419.1 599.5) scale(0.94 1)" text-anchor="middle" font-size="27" fill="#17175c" stroke="#17175c" stroke-width="0.45">5</text>
<text transform="translate(777.1 303.3) scale(0.94 1)" text-anchor="middle" font-size="27" fill="#17175c" stroke="#17175c" stroke-width="0.45">9</text>
<text transform="translate(865.7 313.9) scale(0.94 1)" text-anchor="middle" font-size="27" fill="#17175c" stroke="#17175c" stroke-width="0.45">8</text>
<text transform="translate(664.5 367.0) scale(0.94 1)" text-anchor="middle" font-size="27" fill="#17175c" stroke="#17175c" stroke-width="0.45">11</text>
<text transform="translate(871.3 395.7) scale(0.94 1)" text-anchor="middle" font-size="27" fill="#17175c" stroke="#17175c" stroke-width="0.45">6</text>
<text transform="translate(907.1 408.0) scale(0.94 1)" text-anchor="middle" font-size="27" fill="#17175c" stroke="#17175c" stroke-width="0.45">12</text>
<text transform="translate(281.6 631.0) scale(0.94 1)" text-anchor="middle" font-size="27" fill="#17175c" stroke="#17175c" stroke-width="0.45">2</text>
<text transform="translate(596.5 720.9) scale(0.94 1)" text-anchor="middle" font-size="27" fill="#17175c" stroke="#17175c" stroke-width="0.45">3</text>
<text transform="translate(383.0 779.3) scale(0.94 1)" text-anchor="middle" font-size="27" fill="#17175c" stroke="#17175c" stroke-width="0.45">2B</text>
<text transform="translate(592.6 796.4) scale(0.94 1)" text-anchor="middle" font-size="27" fill="#17175c" stroke="#17175c" stroke-width="0.45">2A</text>
<text transform="translate(362.1 890.9) scale(0.94 1)" text-anchor="middle" font-size="27" fill="#17175c" stroke="#17175c" stroke-width="0.45">2</text>
<text transform="translate(249.9 949.3) scale(0.94 1)" text-anchor="middle" font-size="27" fill="#17175c" stroke="#17175c" stroke-width="0.45">24</text>
<text transform="translate(247.7 996.6) scale(0.94 1)" text-anchor="middle" font-size="27" fill="#17175c" stroke="#17175c" stroke-width="0.45">1</text>
<text transform="translate(644.8 1055.0) scale(0.94 1)" text-anchor="middle" font-size="27" fill="#17175c" stroke="#17175c" stroke-width="0.45">1A</text>
<text transform="translate(251.5 1076.8) scale(0.94 1)" text-anchor="middle" font-size="27" fill="#17175c" stroke="#17175c" stroke-width="0.45">1B</text>
<text transform="translate(874.0 720.2) scale(0.94 1)" text-anchor="middle" font-size="27" fill="#17175c" stroke="#17175c" stroke-width="0.45">22</text>
<text transform="translate(720.1 927.3) scale(0.94 1)" text-anchor="middle" font-size="27" fill="#17175c" stroke="#17175c" stroke-width="0.45">4</text>
<text transform="translate(938.1 923.0) scale(0.94 1)" text-anchor="middle" font-size="27" fill="#17175c" stroke="#17175c" stroke-width="0.45">21</text>
<text transform="translate(867.6 965.3) scale(0.94 1)" text-anchor="middle" font-size="27" fill="#17175c" stroke="#17175c" stroke-width="0.45">20</text>
</svg>
</div>

<!-- splitter -->
<div id="split" class="abs"></div>

<!-- table -->
<div id="tbl" class="abs"></div>
<div class="row grp" style="top:175.6px;height:26.55px"><b class="ex"><i class="pl"></i></b><span class="c1"></span><span class="c2">-</span><span class="c3" style="letter-spacing:0.094px">Trim colour B02</span><span class="c4"></span><span class="c5"></span><span class="c6"></span></div>
<div class="row alt" style="top:202.2px;height:26.55px"><b class="ex"><i class="pl"></i></b><span class="c1"><i class="cb"></i></span><span class="c2">1</span><span class="c3" style="letter-spacing:0.023px">Seat cover</span><span class="c4" style="letter-spacing:-0.405px">4D, 5D LH Black</span><span class="c5">1</span><span class="c6">12773189</span></div>
<div class="row" style="top:228.7px;height:26.55px"><b class="ex"><i class="pl"></i></b><span class="c1"><i class="cb"></i></span><span class="c2">1</span><span class="c3" style="letter-spacing:0.023px">Seat cover</span><span class="c4" style="letter-spacing:-0.460px">4D, 5D RH Black</span><span class="c5">1</span><span class="c6">12773190</span></div>
<div class="row alt" style="top:255.3px;height:26.55px"><b class="ex"><i class="pl"></i></b><span class="c1"><i class="cb"></i></span><span class="c2">1A</span><span class="c3" style="letter-spacing:-0.356px">Heating pad</span><span class="c4" style="letter-spacing:-0.231px">4D, 5D With "Sport" Seat</span><span class="c5">2</span><span class="c6">12783122</span></div>
<div class="row" style="top:281.8px;height:26.55px"><b class="ex"><i class="pl"></i></b><span class="c1"><i class="cb"></i></span><span class="c2">1A</span><span class="c3" style="letter-spacing:-0.356px">Heating pad</span><span class="c4" style="letter-spacing:-0.620px">4D, 5D</span><span class="c5">2</span><span class="c6">12783123</span></div>
<div class="row alt" style="top:308.4px;height:26.55px"><b class="ex"><i class="pl"></i></b><span class="c1"><i class="cb"></i></span><span class="c2">2</span><span class="c3" style="letter-spacing:0.001px">Back cover</span><span class="c4" style="letter-spacing:-0.405px">4D, 5D LH Black</span><span class="c5">1</span><span class="c6">12773186</span></div>
<div class="row" style="top:334.9px;height:26.55px"><b class="ex"><i class="pl"></i></b><span class="c1"><i class="cb"></i></span><span class="c2">2</span><span class="c3" style="letter-spacing:0.001px">Back cover</span><span class="c4" style="letter-spacing:-0.460px">4D, 5D RH Black</span><span class="c5">1</span><span class="c6">12773187</span></div>
<div class="row alt" style="top:361.5px;height:26.55px"><b class="ex"><i class="pl"></i></b><span class="c1"><i class="cb"></i></span><span class="c2">2A</span><span class="c3" style="letter-spacing:-0.356px">Heating pad</span><span class="c4" style="letter-spacing:-0.231px">4D, 5D With "Sport" Seat</span><span class="c5">2</span><span class="c6">12783119</span></div>
<div class="row" style="top:388.0px;height:26.55px"><b class="ex"><i class="pl"></i></b><span class="c1"><i class="cb"></i></span><span class="c2">2A</span><span class="c3" style="letter-spacing:-0.356px">Heating pad</span><span class="c4" style="letter-spacing:-0.620px">4D, 5D</span><span class="c5">2</span><span class="c6">12783121</span></div>
<div class="row alt" style="top:414.6px;height:37.2px"><b class="ex"><i class="pl"></i></b><span class="c1"><i class="cb"></i></span><span class="c2">3</span><span class="c3" style="letter-spacing:-0.127px">Head restraint<br>cover</span><span class="c4" style="letter-spacing:-0.357px">NLS, 4D, 5D Black</span><span class="c5">2</span><span class="c6">12763667</span></div>
<div class="row" style="top:451.8px;height:26.55px"><b class="ex"><i class="pl"></i></b><span class="c1"><i class="cb"></i></span><span class="c2">4</span><span class="c3" style="letter-spacing:-0.177px">Upholstery</span><span class="c4" style="letter-spacing:-0.335px">NLS, 4D, 5D Centre Black</span><span class="c5">2</span><span class="c6">12760954</span></div>
<div class="row alt" style="top:478.3px;height:26.55px"><b class="ex"><i class="pl"></i></b><span class="c1"><i class="cb"></i></span><span class="c2">5</span><span class="c3" style="letter-spacing:0.023px">Seat cover</span><span class="c4" style="letter-spacing:-0.281px">4D, 5D Black With Cup holder</span><span class="c5">1</span><span class="c6">12773183</span></div>
<div class="row" style="top:504.9px;height:26.55px"><b class="ex"><i class="pl"></i></b><span class="c1"><i class="cb"></i></span><span class="c2">5</span><span class="c3" style="letter-spacing:0.023px">Seat cover</span><span class="c4" style="letter-spacing:-0.306px">4D, 5D Black</span><span class="c5">1</span><span class="c6">12773184</span></div>
<div class="row alt" style="top:531.4px;height:26.55px"><b class="ex"><i class="pl"></i></b><span class="c1"><i class="cb"></i></span><span class="c2">6</span><span class="c3" style="letter-spacing:0.001px">Back cover</span><span class="c4" style="letter-spacing:-0.301px">4D LH Black</span><span class="c5">1</span><span class="c6">12773181</span></div>
<div class="row" style="top:558.0px;height:37.2px"><b class="ex"><i class="pl"></i></b><span class="c1"><i class="cb"></i></span><span class="c2">6</span><span class="c3" style="letter-spacing:0.001px">Back cover</span><span class="c4"><span style="letter-spacing:-0.301px">4D LH Black</span><br><span class="cm" style="letter-spacing:0.124px">For backrest cushion with two head rests</span></span><span class="c5">1</span><span class="c6">12773179</span></div>
<div class="row alt" style="top:595.2px;height:26.55px"><b class="ex"><i class="pl"></i></b><span class="c1"><i class="cb"></i></span><span class="c2">7</span><span class="c3" style="letter-spacing:0.001px">Back cover</span><span class="c4" style="letter-spacing:-0.421px">4D RH Black</span><span class="c5">1</span><span class="c6">12773177</span></div>
<div class="row" style="top:621.7px;height:37.2px"><b class="ex"><i class="pl"></i></b><span class="c1"><i class="cb"></i></span><span class="c2">8</span><span class="c3" style="letter-spacing:-0.127px">Head restraint<br>cover</span><span class="c4" style="letter-spacing:-0.405px">4D, 5D LH Black</span><span class="c5">1</span><span class="c6">12763763</span></div>
<div class="row alt" style="top:658.9px;height:37.2px"><b class="ex"><i class="pl"></i></b><span class="c1"><i class="cb"></i></span><span class="c2">9</span><span class="c3" style="letter-spacing:-0.127px">Head restraint<br>cover</span><span class="c4" style="letter-spacing:-0.265px">4D, 5D Centre Black</span><span class="c5">1</span><span class="c6">12763781</span></div>
<div class="row" style="top:696.1px;height:37.2px"><b class="ex"><i class="pl"></i></b><span class="c1"><i class="cb"></i></span><span class="c2">10</span><span class="c3" style="letter-spacing:-0.127px">Head restraint<br>cover</span><span class="c4" style="letter-spacing:-0.460px">4D, 5D RH Black</span><span class="c5">1</span><span class="c6">12763764</span></div>
<div class="row alt" style="top:733.3px;height:37.2px"><b class="ex"><i class="pl"></i></b><span class="c1"><i class="cb"></i></span><span class="c2">11</span><span class="c3" style="letter-spacing:-0.063px"><u>Arm rest Go to 9-3<br>(9440)_8B_3200</u></span><span class="c4" style="letter-spacing:0.120px">Arm rest</span><span class="c5"></span><span class="c6"></span></div>
<div class="row" style="top:770.5px;height:54.5px"><b class="ex"><i class="pl"></i></b><span class="c1"><i class="cb"></i></span><span class="c2">12</span><span class="c3" style="letter-spacing:-0.021px"><u>Backrest cushion<br>Go to 9-3<br>(9440)_8B_3200</u></span><span class="c4" style="letter-spacing:-0.071px">4D Backrest cushion</span><span class="c5"></span><span class="c6"></span></div>
<div class="row alt grp" style="top:825.0px;height:26.55px"><b class="ex"><i class="pl"></i></b><span class="c1"></span><span class="c2">-</span><span class="c3" style="letter-spacing:0.094px">Trim colour B05</span><span class="c4"></span><span class="c5"></span><span class="c6"></span></div>
<div class="row" style="top:851.6px;height:26.55px"><b class="ex"><i class="pl"></i></b><span class="c1"><i class="cb"></i></span><span class="c2">1</span><span class="c3" style="letter-spacing:0.023px">Seat cover</span><span class="c4" style="letter-spacing:-0.270px">NLS, 4D, 5D LH Black Light beige Leather</span><span class="c5">1</span><span class="c6">12770679</span></div>
<div class="row alt" style="top:878.1px;height:26.55px"><b class="ex"><i class="pl"></i></b><span class="c1"><i class="cb"></i></span><span class="c2">1</span><span class="c3" style="letter-spacing:0.023px">Seat cover</span><span class="c4" style="letter-spacing:-0.295px">4D, 5D RH Black Light beige Leather</span><span class="c5">1</span><span class="c6">12770680</span></div>
<div class="row" style="top:904.7px;height:26.55px"><b class="ex"><i class="pl"></i></b><span class="c1"><i class="cb"></i></span><span class="c2">1A</span><span class="c3" style="letter-spacing:-0.356px">Heating pad</span><span class="c4" style="letter-spacing:-0.231px">4D, 5D With "Sport" Seat</span><span class="c5">2</span><span class="c6">12783122</span></div>
<div class="row alt" style="top:931.2px;height:26.55px"><b class="ex"><i class="pl"></i></b><span class="c1"><i class="cb"></i></span><span class="c2">1A</span><span class="c3" style="letter-spacing:-0.356px">Heating pad</span><span class="c4" style="letter-spacing:-0.620px">4D, 5D</span><span class="c5">2</span><span class="c6">12783123</span></div>
<div class="row" style="top:957.8px;height:26.55px"><b class="ex"><i class="pl"></i></b><span class="c1"><i class="cb"></i></span><span class="c2">2</span><span class="c3" style="letter-spacing:0.001px">Back cover</span><span class="c4" style="letter-spacing:-0.270px">NLS, 4D, 5D LH Black Light beige Leather</span><span class="c5">1</span><span class="c6">12770683</span></div>
<div class="row alt sel" style="top:984.3px;height:26.55px"><b class="ex"><i class="pl"></i></b><span class="c1"><i class="cb"></i></span><span class="c2">2</span><span class="c3" style="letter-spacing:0.001px">Back cover</span><span class="c4" style="letter-spacing:-0.295px">4D, 5D RH Black Light beige Leather</span><span class="c5">1</span><span class="c6">12770684</span></div>
<div class="row" style="top:1010.8px;height:26.55px"><b class="ex"><i class="pl"></i></b><span class="c1"><i class="cb"></i></span><span class="c2">2A</span><span class="c3" style="letter-spacing:-0.356px">Heating pad</span><span class="c4" style="letter-spacing:-0.231px">4D, 5D With "Sport" Seat</span><span class="c5">2</span><span class="c6">12783119</span></div>
<div class="row alt" style="top:1037.4px;height:26.55px"><b class="ex"><i class="pl"></i></b><span class="c1"><i class="cb"></i></span><span class="c2">2A</span><span class="c3" style="letter-spacing:-0.356px">Heating pad</span><span class="c4" style="letter-spacing:-0.620px">4D, 5D</span><span class="c5">2</span><span class="c6">12783121</span></div>
<div class="row" style="top:1063.9px;height:37.2px"><b class="ex"><i class="pl"></i></b><span class="c1"><i class="cb"></i></span><span class="c2">3</span><span class="c3" style="letter-spacing:-0.127px">Head restraint</span><span class="c4" style="letter-spacing:-0.357px">NLS, 4D, 5D Black</span><span class="c5">2</span><span class="c6">12763667</span></div>
<div id="hdr" class="abs">
 <i class="hs" style="left:29.5px"></i><i class="hs" style="left:115.5px"></i><i class="hs" style="left:169px"></i><i class="hs" style="left:315px"></i><i class="hs" style="left:1085px"></i><i class="hs" style="left:1125px"></i><i class="hs" style="left:1244.5px"></i>
</div>
<i class="cb" style="left:1271px;top:148.5px"></i>
<span class="ht" style="left:1296px;letter-spacing:-0.255px">Picked</span>
<span class="ht" style="left:1356px;letter-spacing:0.574px">P...</span>
<span class="ht" style="left:1409px;letter-spacing:0.025px">Part Description</span>
<span class="ht" style="left:1555.5px;letter-spacing:0.091px">Applicability and comments</span>
<span class="ht" style="left:2325px;letter-spacing:-1.891px">Q</span>
<span class="ht" style="left:2376.5px;letter-spacing:-0.078px">Part Number</span>
<div id="sb" class="abs"></div><div id="sbt" class="abs"></div>
<svg class="abs" style="left:2481px;top:181px" width="14" height="10" viewBox="0 0 14 10"><path d="M1.5 8 L7 2.5 L12.5 8" fill="none" stroke="#555" stroke-width="2.2"/></svg>
</body></html>
